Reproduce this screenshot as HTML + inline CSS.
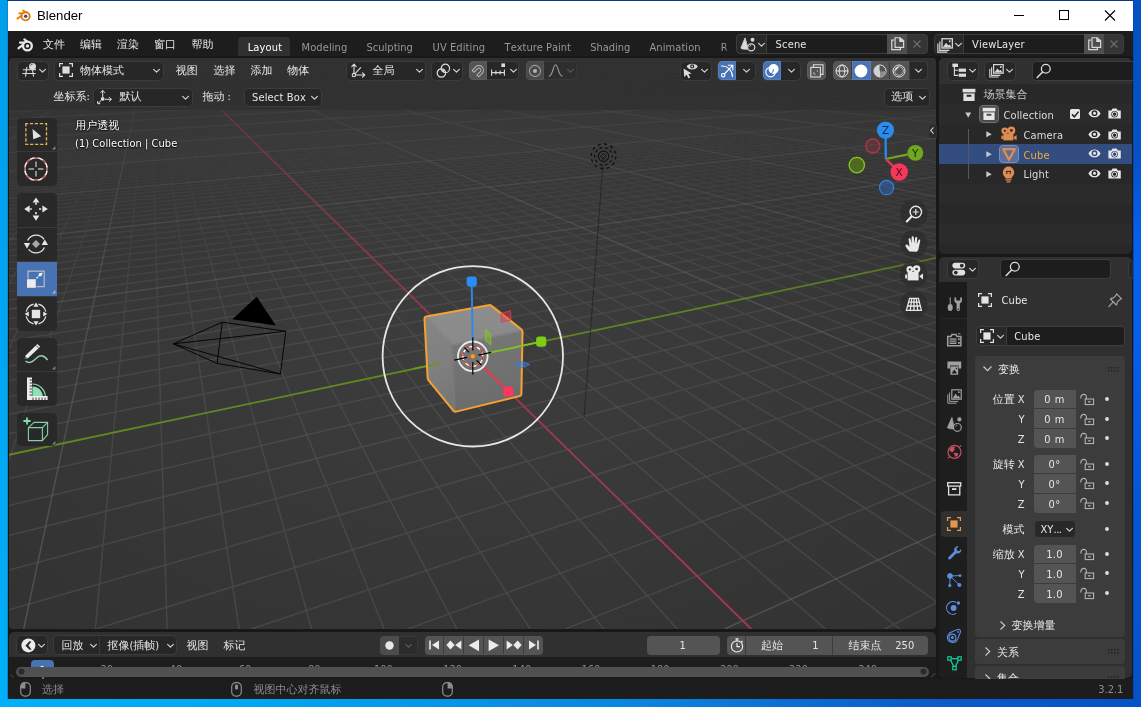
<!DOCTYPE html>
<html lang="zh"><head><meta charset="utf-8"><title>Blender</title>
<style>

html,body{margin:0;padding:0}
body{width:1141px;height:707px;overflow:hidden;position:relative;background:#0a56c8;
 font-family:"DejaVu Sans Condensed","DejaVu Sans","Liberation Sans","WenQuanYi Zen Hei","Noto Sans CJK SC",sans-serif;font-size:11px;color:#e6e6e6;line-height:1;font-kerning:none;font-variant-ligatures:none}
.abs,.abs *{position:absolute;box-sizing:border-box}
div,svg,span{position:absolute;box-sizing:border-box}
.t{white-space:nowrap;line-height:14px;height:14px}
.w{border-radius:4px;background:#282828;border:1px solid #3d3d3d}
svg{overflow:visible}

</style></head><body>
<div style="left:0;top:0;width:1141px;height:707px;background:linear-gradient(90deg,#00b0f8 0%,#00a8f3 20%,#0a86e0 55%,#0a5ecb 80%,#0652c8 100%)"></div>
<div style="left:1133px;top:0;width:8px;height:700px;background:linear-gradient(180deg,#0450c4 0%,#0452ca 22%,#0560ee 34%,#0560ee 46%,#0557d8 70%,#0552cc 100%)"></div>
<div style="left:0;top:0;width:7px;height:700px;background:linear-gradient(180deg,#009fec 0%,#00a6f1 50%,#00b0f8 100%)"></div>
<div style="left:7px;top:0;width:1127px;height:1px;background:#0c3a80"></div><div style="left:1133px;top:1px;width:1px;height:699px;background:#0a47b0"></div>
<div style="left:7px;top:1px;width:1px;height:698px;background:#1883c9"></div>
<div id="win" style="left:8px;top:1px;width:1125px;height:698px;background:#181818;overflow:hidden;will-change:transform">
<div style="left:0;top:0;width:1125px;height:30px;background:#fff"></div>
<svg style="left:8px;top:7px" width="16" height="16" viewBox="0 0 16 16"><g fill="none" stroke="#ea7600" stroke-width="1.9" stroke-linecap="round"><path d="M1.5 10.6 L7.4 6.2"/><path d="M3.2 5.4H8"/><path d="M7.2 2.6 L10 4.6"/></g><circle cx="9.6" cy="8.3" r="4.1" fill="#fff" stroke="#ea7600" stroke-width="1.9"/><circle cx="9.7" cy="8.2" r="1.75" fill="#1f5c9e"/></svg>
<span class="t" style="left:29px;top:7px;font-family:'Liberation Sans',sans-serif;font-size:13.2px;line-height:16px;height:16px;color:#000">Blender</span>
<svg style="left:1000px;top:0" width="125" height="30" viewBox="0 0 125 30" fill="none" stroke="#000" stroke-width="1"><path d="M6 14.5H16"/><rect x="51.5" y="9.5" width="9" height="9"/><path d="M97 9.5L107 19.5M107 9.5L97 19.5" stroke-width="1.1"/></svg>
<div style="left:0px;top:30px;width:1125px;height:25.4px;background:#1d1d1d"></div>
<svg style="left:9px;top:36.5px;" width="17" height="14" viewBox="0 0 17 14"><g fill="none" stroke="#e6e6e6" stroke-width="2.3" stroke-linecap="round"><path d="M1.6 10.2L8 5.4"/><path d="M3 4.6H8.6"/><path d="M7.4 1.4L10.6 3.8"/></g><circle cx="10.4" cy="8" r="4.4" fill="#1d1d1d" stroke="#e6e6e6" stroke-width="2.4"/><circle cx="10.5" cy="8" r="1.7" fill="#e6e6e6"/></svg>
<span class="t" style="left:35px;top:36.5px;color:#e6e6e6">文件</span>
<span class="t" style="left:72px;top:36.5px;color:#e6e6e6">编辑</span>
<span class="t" style="left:109px;top:36.5px;color:#e6e6e6">渲染</span>
<span class="t" style="left:146px;top:36.5px;color:#e6e6e6">窗口</span>
<span class="t" style="left:183.5px;top:36.5px;color:#e6e6e6">帮助</span>
<div style="left:230px;top:36px;width:52.2px;height:19.4px;background:#303030;border-radius:4px 4px 0 0"></div>
<span class="t" style="left:239.7px;top:40px;letter-spacing:0.16px;color:#ffffff">Layout</span>
<span class="t" style="left:293.6px;top:40px;letter-spacing:0.08px;color:#989898">Modeling</span>
<span class="t" style="left:358.5px;top:40px;letter-spacing:0.02px;color:#989898">Sculpting</span>
<span class="t" style="left:424.6px;top:40px;letter-spacing:0.09px;color:#989898">UV Editing</span>
<span class="t" style="left:496.6px;top:40px;letter-spacing:0px;color:#989898">Texture Paint</span>
<span class="t" style="left:582.2px;top:40px;letter-spacing:0px;color:#989898">Shading</span>
<span class="t" style="left:641.4px;top:40px;letter-spacing:0.1px;color:#989898">Animation</span>
<span class="t" style="left:712.7px;top:40px;letter-spacing:0px;color:#989898">Rendering</span>
<div style="left:717px;top:30px;width:11.5px;height:25.4px;background:linear-gradient(90deg,rgba(29,29,29,0),#1d1d1d 30%)"></div>
<div style="left:728px;top:33px;width:31.3px;height:20px;background:#282828;border:1px solid #3d3d3d;border-radius:4px 0 0 4px"></div>
<div style="left:758.3px;top:33px;width:121.1px;height:20px;background:#1d1d1d;border:1px solid #3d3d3d;border-right:none"></div>
<div style="left:879.4px;top:33px;width:20px;height:20px;background:#4d4d4d;border-top:1px solid #555;border-bottom:1px solid #555"></div>
<div style="left:899.4px;top:33px;width:20.2px;height:20px;background:#353535;border:1px solid #3d3d3d;border-left:none;border-radius:0 4px 4px 0"></div>
<span class="t" style="left:767.6px;top:37px;letter-spacing:.16px;color:#e6e6e6">Scene</span>
<svg style="left:882px;top:35.4px;" width="15.4" height="15.4" viewBox="0 0 14 14"><g fill="none" stroke="#d8d8d8" stroke-width="1.1"><path d="M3.6 3.8H1.6V12.4H9.4V10.6"/><path d="M4.6 1.6H9.2L12.4 4.4V10.4H4.6Z"/><path d="M9 1.6V4.8H12.4" fill="#d8d8d8"/></g></svg>
<svg style="left:905.4px;top:39px;" width="8" height="8" viewBox="0 0 8 8"><path d="M0.5 0.5L7.5 7.5M7.5 0.5L0.5 7.5" stroke="#6e6e6e" stroke-width="1.1" fill="none"/></svg>
<svg style="left:750.2px;top:41.5px;" width="7" height="3.6" viewBox="0 0 7 3.6"><path d="M0.6 0.3L3.5 3.2L6.4 0.3" fill="none" stroke="#d0d0d0" stroke-width="1.2" stroke-linecap="round" stroke-linejoin="round"/></svg>
<svg style="left:731.8px;top:35.6px;" width="17.3" height="15.1" viewBox="0 0 16 14"><path d="M4.7 0.8L0.8 10.2C0.6 11.2 7.4 12 7.5 10.9Z" fill="#d8d8d8" stroke="#d8d8d8" stroke-width=".7" stroke-linejoin="round"/><circle cx="11.6" cy="2.6" r="1.8" fill="#d8d8d8"/><circle cx="10.4" cy="9.6" r="3.3" fill="#282828" stroke="#d8d8d8" stroke-width="1.1"/><path d="M8.9 8.9A2 2 0 0 1 10.3 7.7" fill="none" stroke="#d8d8d8" stroke-width=".8"/></svg>
<div style="left:925.6px;top:33px;width:30.2px;height:20px;background:#282828;border:1px solid #3d3d3d;border-radius:4px 0 0 4px"></div>
<div style="left:954.8px;top:33px;width:121.2px;height:20px;background:#1d1d1d;border:1px solid #3d3d3d;border-right:none"></div>
<div style="left:1076px;top:33px;width:20px;height:20px;background:#4d4d4d;border-top:1px solid #555;border-bottom:1px solid #555"></div>
<div style="left:1096px;top:33px;width:20.3px;height:20px;background:#353535;border:1px solid #3d3d3d;border-left:none;border-radius:0 4px 4px 0"></div>
<span class="t" style="left:964.1px;top:37px;letter-spacing:.16px;color:#e6e6e6">ViewLayer</span>
<svg style="left:1078.6px;top:35.4px;" width="15.4" height="15.4" viewBox="0 0 14 14"><g fill="none" stroke="#d8d8d8" stroke-width="1.1"><path d="M3.6 3.8H1.6V12.4H9.4V10.6"/><path d="M4.6 1.6H9.2L12.4 4.4V10.4H4.6Z"/><path d="M9 1.6V4.8H12.4" fill="#d8d8d8"/></g></svg>
<svg style="left:1102px;top:39px;" width="8" height="8" viewBox="0 0 8 8"><path d="M0.5 0.5L7.5 7.5M7.5 0.5L0.5 7.5" stroke="#6e6e6e" stroke-width="1.1" fill="none"/></svg>
<svg style="left:946.7px;top:41.5px;" width="7" height="3.6" viewBox="0 0 7 3.6"><path d="M0.6 0.3L3.5 3.2L6.4 0.3" fill="none" stroke="#d0d0d0" stroke-width="1.2" stroke-linecap="round" stroke-linejoin="round"/></svg>
<svg style="left:929.4px;top:35.6px;" width="17.3" height="15.1" viewBox="0 0 16 14"><g fill="none" stroke="#d8d8d8" stroke-width="1.1"><path d="M2.6 4.2V12.4H11.4"/><path d="M0.8 6V14H9.6" /></g><rect x="4.6" y="1.6" width="9.6" height="8.6" fill="none" stroke="#d8d8d8" stroke-width="1.2"/><path d="M5.4 9.4L8.4 5.4L10.4 7.8L11.6 6.8L13.4 9.4Z" fill="#d8d8d8"/><circle cx="11.8" cy="4" r="0.9" fill="#d8d8d8"/></svg>
<div style="left:1px;top:57px;width:927px;height:571px;background:radial-gradient(ellipse farthest-corner at 50% 50%,#3d3d3d,#323232);border-radius:4px;overflow:hidden">
<svg style="left:0;top:0" width="927" height="571" viewBox="0 0 927 571" fill="none" stroke-width="1.5"><path stroke="#606060" stroke-opacity="0.03" d="M0.0 49.5L15.5 48.8M0.0 50.1L31.3 48.6M0.0 50.7L63.7 47.7M0.0 51.3L79.4 47.5M0.0 51.9L95.2 47.4M0.0 52.5L126.9 46.5M0.0 53.1L142.7 46.3M0.0 54.4L189.6 45.2M0.0 55.1L205.3 45.0M0.0 55.8L221.0 44.9M0.0 56.4L236.8 44.7M0.0 57.1L267.3 43.8M0.0 57.9L283.1 43.6M0.0 58.6L298.8 43.5M0.0 59.3L314.6 43.3M0.0 60.1L344.5 42.4M0.0 61.7L376.0 42.1M0.0 62.5L391.8 41.9M0.0 63.3L407.7 41.8M0.0 64.1L423.6 41.6M0.0 65.0L452.6 40.7M0.0 65.9L468.5 40.5M0.0 66.8L484.4 40.4M0.1 67.7L500.3 40.2M41.9 66.3L516.2 40.0M103.0 64.8L548.2 39.7M143.2 63.4L564.3 39.5M182.6 62.1L580.3 39.4M202.5 61.9L596.5 39.2M241.1 60.7L624.4 38.3M260.9 60.5L640.4 38.2M280.7 60.3L656.5 38.0M318.5 59.0L672.7 37.8M338.2 58.8L688.8 37.6M23.6 2.1L0.0 6.2M377.9 58.5L721.3 37.3M414.6 57.2L737.6 37.1M434.4 57.0L753.9 36.9M454.2 56.9L770.2 36.8M474.1 56.7L786.6 36.6M494.0 56.5L803.0 36.4M514.0 56.3L819.4 36.2M534.1 56.1L835.9 36.1M554.2 55.9L852.4 35.9M47.3 1.5L20.9 7.1M594.5 55.5L885.6 35.5M614.8 55.3L902.2 35.4M635.1 55.1L909.2 35.9M655.4 54.9L926.0 35.7M675.8 54.7L927.0 36.6M696.3 54.5L927.0 37.7M716.8 54.3L927.0 38.8M737.4 54.1L927.0 40.0M758.1 53.9L927.0 41.1M70.5 1.0L50.9 6.4M799.5 53.5L927.0 43.6M807.2 54.4L927.0 44.9M828.3 54.2L927.0 46.3M849.4 54.0L927.0 47.7M870.5 53.8L927.0 49.1M891.8 53.6L927.0 50.6M913.1 53.4L927.0 52.2M922.3 54.2L927.0 53.8M93.2 0.5L80.1 5.6M8.3 48.6L0.0 52.8M14.4 49.4L0.0 57.1M22.9 49.0L-0.0 62.1M31.3 48.6L0.1 67.7M39.7 48.3L11.0 67.1M115.2 0.0L108.4 4.8M56.2 47.5L32.5 65.9M63.0 48.3L43.1 65.3M71.2 47.9L51.5 66.7M79.4 47.5L62.1 66.1M87.5 47.2L72.6 65.5M95.6 46.8L83.0 65.0M102.9 47.6L93.2 64.4M111.0 47.2L103.4 63.8M119.0 46.8L112.8 65.2M136.9 0.0L136.0 4.1M134.8 46.1L133.2 64.0M142.6 45.7L143.2 63.4M150.6 46.5L153.1 62.9M158.4 46.1L162.9 62.3M166.2 45.7L172.6 61.8M173.9 45.4L183.1 63.1M181.6 45.0L192.8 62.5M190.0 45.8L202.5 61.9M197.7 45.4L212.0 61.4M212.8 44.7L230.8 60.3M220.3 44.3L242.3 61.6M229.3 45.1L251.6 61.0M236.8 44.7L260.9 60.5M244.2 44.3L270.1 59.9M251.6 44.0L279.1 59.4M258.9 43.6L291.5 60.6M268.5 44.4L300.6 60.1M275.8 44.0L309.6 59.6M182.6 0.0L188.9 2.7M290.3 43.3L327.3 58.5M297.4 42.9L340.5 59.7M307.5 43.7L349.3 59.2M314.6 43.3L358.0 58.7M321.7 43.0L366.7 58.1M328.8 42.6L375.2 57.6M335.7 42.2L389.2 58.8M346.3 43.0L397.8 58.3M353.3 42.6L406.2 57.8M206.8 0.0L214.3 2.1M367.1 41.9L422.9 56.7M378.2 42.6L437.7 57.9M385.0 42.3L446.0 57.4M391.8 41.9L454.2 56.9M398.6 41.6L462.3 56.3M405.3 41.2L470.4 55.8M416.9 41.9L486.0 57.0M423.6 41.6L494.0 56.5M430.2 41.2L502.0 56.0M231.9 0.0L239.0 1.4M443.4 40.5L526.2 56.6M455.5 41.2L534.1 56.1M462.0 40.9L541.8 55.6M468.5 40.5L549.5 55.1M474.9 40.2L566.6 56.2M487.5 40.9L574.3 55.7M493.9 40.6L581.9 55.2M500.3 40.2L589.4 54.7M506.6 39.9L607.3 55.8M258.0 0.0L263.1 0.8M525.9 40.2L622.2 54.8M532.2 39.9L629.5 54.3M538.4 39.5L648.1 55.4M544.6 39.2L655.4 54.9M558.1 39.9L662.6 54.4M564.3 39.5L669.8 53.9M570.3 39.2L689.2 55.1M576.4 38.8L696.3 54.5M590.4 39.5L703.3 54.0M285.1 0.0L288.7 0.4M602.4 38.8L730.5 54.7M608.3 38.5L737.4 54.1M614.2 38.2L744.3 53.6M628.8 38.8L765.3 54.8M634.6 38.5L772.0 54.3M640.4 38.2L778.8 53.7M646.2 37.8L785.4 53.2M661.3 38.5L807.2 54.4M667.0 38.2L813.8 53.9M678.3 37.5L842.9 54.5M693.9 38.1L849.4 54.0M699.5 37.8L855.8 53.5M705.0 37.5L879.2 54.6M710.6 37.1L885.5 54.1M726.6 37.8L891.8 53.6M732.1 37.5L898.0 53.1M737.6 37.1L922.3 54.2M743.0 36.8L927.0 53.6M764.9 37.1L927.0 51.5M770.2 36.8L927.0 50.5M775.5 36.4L927.0 49.5M792.5 37.1L927.0 48.5M797.8 36.8L927.0 47.6M803.0 36.4L927.0 46.6M808.1 36.1L927.0 45.7M825.7 36.7L927.0 44.9M830.8 36.4L927.0 44.0M841.0 35.7L927.0 42.4M859.0 36.4L927.0 41.6M864.0 36.1L927.0 40.8M869.0 35.7L927.0 40.0M873.9 35.4L927.0 39.3M892.4 36.0L927.0 38.5M897.3 35.7L927.0 37.8M902.2 35.4L927.0 37.1M921.3 36.0L927.0 36.4M0.0 2.9L121.7 0.0M0.0 3.4L140.7 0.0M0.0 3.9L160.4 0.0M0.0 4.5L180.7 0.0M0.0 5.0L201.7 0.0M0.0 5.6L223.4 0.0M0.0 6.3L245.9 0.0M-0.0 7.0L269.1 0.0"/>
<path stroke="#606060" stroke-opacity="0.06" d="M860.4 3.3L927.0 0.6M919.5 3.3L927.0 3.0M0.0 68.6L41.9 66.3M0.0 70.6L103.0 64.8M0.0 71.6L143.2 63.4M0.0 72.6L182.6 62.1M0.0 73.6L202.5 61.9M0.0 74.7L241.1 60.7M0.0 75.8L260.9 60.5M0.0 77.0L280.7 60.3M0.0 78.1L318.5 59.0M0.0 79.3L338.2 58.8M0.0 81.8L377.9 58.5M0.0 83.1L414.6 57.2M0.0 84.4L434.4 57.0M20.7 84.4L454.2 56.9M70.7 82.6L474.1 56.7M119.6 80.8L494.0 56.5M167.4 79.0L514.0 56.3M214.3 77.3L534.1 56.1M238.0 77.1L554.2 55.9M20.9 7.1L0.0 11.5M307.3 75.2L594.5 55.5M351.9 73.6L614.8 55.3M375.4 73.4L635.1 55.1M399.0 73.2L655.4 54.9M422.7 73.0L675.8 54.7M465.9 71.3L696.3 54.5M489.4 71.1L716.8 54.3M513.1 70.9L737.4 54.1M536.8 70.7L758.1 53.9M50.9 6.4L13.2 16.7M584.4 70.3L799.5 53.5M608.4 70.1L807.2 54.4M632.4 69.9L828.3 54.2M656.5 69.7L849.4 54.0M680.6 69.5L870.5 53.8M688.1 70.7L891.8 53.6M712.6 70.5L913.1 53.4M737.3 70.3L922.3 54.2M762.1 70.1L927.0 55.5M80.1 5.6L55.1 15.4M795.9 71.1L927.0 59.1M821.2 70.9L927.0 61.0M846.6 70.7L927.0 63.1M872.0 70.5L927.0 65.1M882.5 71.7L927.0 67.3M908.4 71.5L927.0 69.6M11.0 67.1L0.0 74.3M108.4 4.8L95.4 14.1M32.5 65.9L7.6 85.2M43.1 65.3L20.7 84.4M51.5 66.7L33.7 83.6M62.1 66.1L46.5 82.8M72.6 65.5L59.2 82.0M83.0 65.0L71.7 81.2M93.2 64.4L82.4 83.2M103.4 63.8L95.0 82.4M112.8 65.2L107.4 81.6M136.0 4.1L134.1 12.9M133.2 64.0L131.7 80.0M143.2 63.4L143.6 79.2M153.1 62.9L155.4 78.4M162.9 62.3L167.1 77.7M172.6 61.8L179.7 79.6M183.1 63.1L191.3 78.8M192.8 62.5L202.9 78.1M202.5 61.9L214.3 77.3M212.0 61.4L225.6 76.6M230.8 60.3L250.7 77.7M242.3 61.6L261.8 76.9M251.6 61.0L272.8 76.2M260.9 60.5L283.7 75.4M270.1 59.9L294.5 74.7M279.1 59.4L305.1 74.0M291.5 60.6L320.4 75.8M300.6 60.1L331.0 75.0M309.6 59.6L341.5 74.3M188.9 2.7L207.2 10.7M327.3 58.5L362.2 72.9M340.5 59.7L378.6 74.6M349.3 59.2L388.9 73.9M358.0 58.7L399.0 73.2M366.7 58.1L409.1 72.5M375.2 57.6L418.9 71.7M389.2 58.8L436.6 73.5M397.8 58.3L446.4 72.8M406.2 57.8L456.2 72.0M214.3 2.1L241.8 9.6M422.9 56.7L475.4 70.6M437.7 57.9L494.2 72.4M446.0 57.4L503.7 71.6M454.2 56.9L513.1 70.9M462.3 56.3L522.4 70.2M470.4 55.8L542.2 71.9M486.0 57.0L551.4 71.2M494.0 56.5L560.6 70.5M502.0 56.0L569.6 69.8M239.0 1.4L275.0 8.6M526.2 56.6L599.5 70.8M534.1 56.1L608.4 70.1M541.8 55.6L617.2 69.4M549.5 55.1L639.1 71.1M566.6 56.2L647.8 70.4M574.3 55.7L656.5 69.7M581.9 55.2L665.0 69.0M589.4 54.7L688.1 70.7M607.3 55.8L696.5 70.0M263.1 0.8L310.6 8.2M622.2 54.8L729.0 71.0M629.5 54.3L737.3 70.3M648.1 55.4L745.5 69.6M655.4 54.9L770.8 71.3M662.6 54.4L778.9 70.6M669.8 53.9L786.9 69.9M689.2 55.1L813.3 71.6M696.3 54.5L821.2 70.9M703.3 54.0L829.0 70.2M288.7 0.4L342.1 7.2M730.5 54.7L864.4 71.2M737.4 54.1L872.0 70.5M744.3 53.6L900.8 72.3M765.3 54.8L908.4 71.5M772.0 54.3L915.8 70.8M778.8 53.7L927.0 70.5M785.4 53.2L927.0 68.9M807.2 54.4L927.0 67.4M813.8 53.9L927.0 66.0M313.4 0.0L377.3 6.7M842.9 54.5L927.0 63.2M849.4 54.0L927.0 61.9M855.8 53.5L927.0 60.6M879.2 54.6L927.0 59.4M885.5 54.1L927.0 58.1M891.8 53.6L927.0 56.9M898.0 53.1L927.0 55.8M922.3 54.2L927.0 54.7M342.9 0.0L407.2 5.8M373.7 0.0L441.9 5.3M405.8 0.0L476.8 4.9M474.4 0.0L547.1 4.0M511.2 0.0L582.5 3.5M0.0 8.5L318.1 0.0M0.0 9.3L343.9 0.0M0.0 10.2L370.7 0.0M0.0 11.1L398.6 0.0M0.0 12.1L427.5 0.0M0.0 13.2L457.6 0.0M0.0 14.4L488.9 0.0M0.0 15.7L521.5 0.0M0.0 17.1L13.2 16.7M241.8 9.6L555.5 0.0M504.6 4.0L628.0 0.0M573.8 3.1L666.7 0.0M591.5 3.9L707.2 0.0M664.3 3.0L749.6 0.0M686.7 3.9L794.1 0.0M763.5 2.9L840.8 0.0M791.4 3.9L889.8 0.0M549.7 0.0L638.0 3.9M590.2 0.0L664.3 3.0M632.7 0.0L737.8 3.9M677.4 0.0L763.5 2.9M724.5 0.0L847.8 3.8M774.2 0.0L872.6 2.8M826.7 0.0L927.0 2.7"/>
<path stroke="#606060" stroke-opacity="0.09" d="M550.1 16.1L860.4 3.3M633.4 15.6L919.5 3.3M774.9 16.4L927.0 9.0M853.3 16.8L927.0 13.0M920.3 18.2L927.0 17.8M0.0 85.7L20.7 84.4M0.0 87.1L70.7 82.6M0.0 88.5L119.6 80.8M0.0 90.0L167.4 79.0M0.0 91.5L214.3 77.3M0.0 93.1L238.0 77.1M0.0 96.3L307.3 75.2M-0.0 98.0L351.9 73.6M0.0 99.7L375.4 73.4M0.0 101.5L399.0 73.2M29.2 101.3L422.7 73.0M87.4 98.9L465.9 71.3M144.1 96.7L489.4 71.1M199.5 94.4L513.1 70.9M253.5 92.2L536.8 70.7M13.2 16.7L0.0 20.2M333.5 89.9L584.4 70.3M361.0 89.7L608.4 70.1M412.0 87.6L632.4 69.9M439.3 87.4L656.5 69.7M466.7 87.2L680.6 69.5M494.3 87.0L688.1 70.7M521.9 86.8L712.6 70.5M549.6 86.6L737.3 70.3M577.5 86.4L762.1 70.1M55.1 15.4L14.8 31.2M633.5 85.9L795.9 71.1M661.6 85.7L821.2 70.9M689.9 85.5L846.6 70.7M698.7 87.2L872.0 70.5M727.6 87.0L882.5 71.7M756.5 86.7L908.4 71.5M785.5 86.5L927.0 72.0M814.7 86.3L927.0 74.6M825.8 88.0L927.0 77.2M95.4 14.1L76.7 27.4M885.5 87.6L927.0 83.0M7.6 85.2L0.0 91.1M898.0 89.4L927.0 86.1M20.7 84.4L0.7 101.5M33.7 83.6L16.0 100.4M46.5 82.8L27.3 103.3M59.2 82.0L42.7 102.2M71.7 81.2L57.8 101.1M82.4 83.2L72.7 100.0M95.0 82.4L87.4 98.9M107.4 81.6L101.9 97.9M134.1 12.9L131.4 25.4M131.7 80.0L130.2 95.8M143.6 79.2L144.1 94.8M155.4 78.4L158.3 97.5M167.1 77.7L172.2 96.5M179.7 79.6L186.0 95.4M191.3 78.8L199.5 94.4M202.9 78.1L212.8 93.4M214.3 77.3L226.0 92.4M225.6 76.6L238.9 91.5M250.7 77.7L268.3 93.0M261.8 76.9L281.1 92.0M272.8 76.2L293.7 91.1M283.7 75.4L306.1 90.1M294.5 74.7L318.4 89.2M305.1 74.0L330.5 88.2M320.4 75.8L348.9 90.6M331.0 75.0L361.0 89.7M341.5 74.3L372.9 88.7M207.2 10.7L232.4 21.6M362.2 72.9L396.3 86.9M378.6 74.6L416.2 89.3M388.9 73.9L427.9 88.3M399.0 73.2L439.3 87.4M409.1 72.5L450.6 86.5M418.9 71.7L461.7 85.6M436.6 73.5L483.2 87.9M446.4 72.8L494.3 87.0M456.2 72.0L505.2 86.1M241.8 9.6L283.1 21.0M475.4 70.6L538.9 87.5M494.2 72.4L549.6 86.6M503.7 71.6L560.3 85.6M513.1 70.9L570.7 84.7M522.4 70.2L595.0 87.1M542.2 71.9L605.4 86.1M551.4 71.2L615.7 85.2M560.6 70.5L641.4 87.6M569.6 69.8L651.6 86.7M275.0 8.6L328.7 19.3M599.5 70.8L671.5 84.8M608.4 70.1L698.7 87.2M617.2 69.4L708.6 86.2M639.1 71.1L718.2 85.3M647.8 70.4L746.9 87.7M656.5 69.7L756.5 86.7M665.0 69.0L766.0 85.8M688.1 70.7L796.2 88.3M696.5 70.0L805.5 87.3M310.6 8.2L378.6 18.7M729.0 71.0L846.5 88.8M737.3 70.3L855.6 87.8M745.5 69.6L864.5 86.8M770.8 71.3L898.0 89.4M778.9 70.6L906.8 88.4M786.9 69.9L927.0 89.0M813.3 71.6L927.0 86.8M821.2 70.9L927.0 84.7M829.0 70.2L927.0 82.7M342.1 7.2L420.8 17.1M864.4 71.2L927.0 78.9M872.0 70.5L927.0 77.1M900.8 72.3L927.0 75.4M908.4 71.5L927.0 73.7M915.8 70.8L927.0 72.0M377.3 6.7L470.0 16.5M407.2 5.8L519.5 15.9M441.9 5.3L569.3 15.3M476.8 4.9L633.4 15.6M547.1 4.0L774.9 16.4M582.5 3.5L853.3 16.8M13.2 16.7L241.8 9.6M0.0 20.2L504.6 4.0M0.0 22.1L573.8 3.1M0.0 24.1L591.5 3.9M0.0 26.3L664.3 3.0M0.0 28.9L686.7 3.9M283.1 21.0L763.5 2.9M470.0 16.5L791.4 3.9M638.0 3.9L927.0 16.8M664.3 3.0L927.0 13.6M737.8 3.9L927.0 10.9M763.5 2.9L927.0 8.5M847.8 3.8L927.0 6.3M872.6 2.8L927.0 4.4"/>
<path stroke="#606060" stroke-opacity="0.12" d="M0.0 38.6L550.1 16.1M0.0 42.9L633.4 15.6M514.9 28.9L774.9 16.4M623.4 28.7L853.3 16.8M737.6 28.4L920.3 18.2M812.5 30.9L927.0 23.9M921.0 32.2L927.0 31.8M0.0 103.4L29.2 101.3M0.0 105.3L87.4 98.9M0.0 107.3L144.1 96.7M0.0 109.3L199.5 94.4M0.0 111.5L253.5 92.2M0.0 115.9L333.5 89.9M0.0 118.3L361.0 89.7M0.0 120.7L412.0 87.6M79.3 116.7L439.3 87.4M144.6 113.8L466.7 87.2M208.1 111.0L494.3 87.0M269.9 108.3L521.9 86.8M329.9 105.6L549.6 86.6M361.2 105.4L577.5 86.4M14.8 31.2L0.0 36.9M450.5 102.6L633.5 85.9M481.8 102.4L661.6 85.7M513.3 102.2L689.9 85.5M544.8 102.0L698.7 87.2M576.6 101.8L727.6 87.0M608.4 101.6L756.5 86.7M640.4 101.4L785.5 86.5M649.5 103.6L814.7 86.3M682.2 103.4L825.8 88.0M76.7 27.4L55.1 42.8M748.1 103.0L885.5 87.6M781.2 102.8L898.0 89.4M0.7 101.5L0.0 102.1M793.3 105.0L927.0 89.3M16.0 100.4L0.0 115.6M827.2 104.8L927.0 92.8M27.3 103.3L9.5 122.4M861.3 104.6L927.0 96.5M42.7 102.2L27.4 121.0M875.2 107.0L927.0 100.4M57.8 101.1L45.0 119.5M910.1 106.8L927.0 104.6M72.7 100.0L62.3 118.1M925.3 109.2L927.0 109.0M87.4 98.9L79.3 116.7M101.9 97.9L96.0 115.4M131.4 25.4L128.4 39.6M130.2 95.8L128.7 112.7M144.1 94.8L144.6 111.4M158.3 97.5L161.0 115.0M172.2 96.5L177.0 113.7M186.0 95.4L192.7 112.3M199.5 94.4L208.1 111.0M212.8 93.4L223.4 109.8M226.0 92.4L238.3 108.5M238.9 91.5L253.1 107.3M268.3 93.0L287.0 109.4M281.1 92.0L301.5 108.1M293.7 91.1L315.8 106.9M306.1 90.1L329.9 105.6M318.4 89.2L343.7 104.4M330.5 88.2L357.4 103.3M348.9 90.6L379.1 106.5M361.0 89.7L392.7 105.2M372.9 88.7L406.1 104.0M232.4 21.6L260.3 33.8M396.3 86.9L432.3 101.7M416.2 89.3L456.1 104.8M427.9 88.3L469.1 103.6M439.3 87.4L481.8 102.4M450.6 86.5L494.4 101.3M461.7 85.6L520.0 104.4M483.2 87.9L532.5 103.2M494.3 87.0L544.8 102.0M505.2 86.1L557.0 100.9M283.1 21.0L326.7 33.0M538.9 87.5L596.5 102.8M549.6 86.6L608.4 101.6M560.3 85.6L620.1 100.4M570.7 84.7L649.5 103.6M595.0 87.1L661.1 102.4M605.4 86.1L672.5 101.2M615.7 85.2L703.8 104.4M641.4 87.6L715.1 103.2M651.6 86.7L726.2 102.0M328.7 19.3L384.3 30.4M671.5 84.8L770.5 104.0M698.7 87.2L781.2 102.8M708.6 86.2L816.6 106.1M718.2 85.3L827.2 104.8M746.9 87.7L837.7 103.6M756.5 86.7L875.2 107.0M766.0 85.8L885.5 105.7M796.2 88.3L925.3 109.2M805.5 87.3L927.0 106.6M378.6 18.7L449.3 29.7M846.5 88.8L927.0 101.0M855.6 87.8L927.0 98.4M864.5 86.8L927.0 95.9M898.0 89.4L927.0 93.5M906.8 88.4L927.0 91.2M420.8 17.1L514.9 28.9M470.0 16.5L581.0 28.2M519.5 15.9L647.7 27.4M569.3 15.3L737.6 28.4M633.4 15.6L865.5 31.5M774.9 16.4L927.0 24.6M853.3 16.8L927.0 20.4M0.0 31.7L283.1 21.0M0.0 34.9L470.0 16.5"/>
<path stroke="#606060" stroke-opacity="0.15" d="M0.0 53.8L514.9 28.9M250.2 47.9L623.4 28.7M519.6 40.6L737.6 28.4M653.2 40.6L812.5 30.9M767.2 42.6L921.0 32.2M921.6 42.8L927.0 42.3M0.0 123.2L79.3 116.7M0.0 125.8L144.6 113.8M0.0 128.5L208.1 111.0M0.0 131.3L269.9 108.3M0.0 134.3L329.9 105.6M0.0 137.3L361.2 105.4M108.2 133.9L450.5 102.6M216.5 127.1L481.8 102.4M285.7 123.8L513.3 102.2M321.3 123.6L544.8 102.0M387.9 120.4L576.6 101.8M423.3 120.2L608.4 101.6M458.8 120.0L640.4 101.4M494.5 119.8L649.5 103.6M530.4 119.6L682.2 103.4M55.1 42.8L37.6 55.3M602.7 119.2L748.1 103.0M639.1 119.0L781.2 102.8M675.6 118.8L793.3 105.0M686.8 121.7L827.2 104.8M9.5 122.4L0.0 132.6M724.4 121.5L861.3 104.6M27.4 121.0L12.4 139.4M762.1 121.3L875.2 107.0M45.0 119.5L32.4 137.6M800.0 121.1L910.1 106.8M62.3 118.1L52.1 135.8M814.3 124.1L925.3 109.2M79.3 116.7L71.4 134.1M853.2 123.9L927.0 113.7M96.0 115.4L90.3 132.4M128.4 39.6L125.2 54.4M909.0 126.9L927.0 124.2M128.7 112.7L126.5 135.5M144.6 111.4L145.2 133.7M161.0 115.0L163.6 132.0M177.0 113.7L181.5 130.4M192.7 112.3L199.2 128.7M208.1 111.0L216.5 127.1M223.4 109.8L233.5 125.5M238.3 108.5L250.2 124.0M253.1 107.3L266.7 122.5M287.0 109.4L305.1 125.2M301.5 108.1L321.3 123.6M315.8 106.9L337.1 122.1M329.9 105.6L352.7 120.6M343.7 104.4L368.0 119.1M357.4 103.3L393.0 123.2M379.1 106.5L408.3 121.7M392.7 105.2L423.3 120.2M406.1 104.0L438.0 118.7M260.3 33.8L288.4 46.0M432.3 101.7L480.1 121.3M456.1 104.8L494.5 119.8M469.1 103.6L508.7 118.3M481.8 102.4L522.6 116.9M494.4 101.3L552.6 120.9M520.0 104.4L566.5 119.4M532.5 103.2L580.1 117.9M544.8 102.0L593.4 116.5M557.0 100.9L625.8 120.6M326.7 33.0L370.6 45.1M596.5 102.8L652.1 117.5M608.4 101.6L686.8 121.7M620.1 100.4L699.7 120.2M649.5 103.6L712.4 118.6M661.1 102.4L749.6 122.9M672.5 101.2L762.1 121.3M703.8 104.4L774.4 119.8M715.1 103.2L814.3 124.1M726.2 102.0L826.3 122.5M384.3 30.4L439.5 41.4M770.5 104.0L880.8 125.4M781.2 102.8L892.4 123.7M816.6 106.1L927.0 126.4M827.2 104.8L927.0 122.7M837.7 103.6L927.0 119.2M875.2 107.0L927.0 115.8M885.5 105.7L927.0 112.6M925.3 109.2L927.0 109.5M449.3 29.7L519.6 40.6M514.9 28.9L622.7 42.5M581.0 28.2L708.7 41.6M647.7 27.4L829.0 43.7M737.6 28.4L921.6 42.8M865.5 31.5L927.0 35.7"/>
<path stroke="#606060" stroke-opacity="0.18" d="M125.2 54.4L250.2 47.9M303.7 52.6L519.6 40.6M522.9 48.6L653.2 40.6M737.5 44.6L767.2 42.6M0.0 143.8L108.2 133.9M0.0 147.3L216.5 127.1M0.0 150.9L285.7 123.8M0.0 154.6L321.3 123.6M0.0 158.6L387.9 120.4M61.2 156.5L423.3 120.2M186.4 147.9L458.8 120.0M265.5 143.8L494.5 119.8M341.9 139.8L530.4 119.6M421.9 139.5L602.7 119.2M494.6 135.6L639.1 119.0M534.5 135.4L675.6 118.8M574.5 135.2L686.8 121.7M614.8 135.1L724.4 121.5M12.4 139.4L0.0 154.6M625.8 138.6L762.1 121.3M32.4 137.6L16.1 161.1M667.2 138.4L800.0 121.1M52.1 135.8L38.9 158.8M708.9 138.3L814.3 124.1M71.4 134.1L61.2 156.5M750.8 138.1L853.2 123.9M90.3 132.4L83.0 154.4M808.6 141.7L909.0 126.9M126.5 135.5L125.2 150.1M852.1 141.5L927.0 130.1M145.2 133.7L145.7 148.1M869.6 145.5L927.0 136.4M163.6 132.0L165.7 146.1M914.4 145.3L927.0 143.2M181.5 130.4L185.3 144.1M199.2 128.7L207.6 149.8M216.5 127.1L227.3 147.8M233.5 125.5L246.6 145.8M250.2 124.0L265.5 143.8M266.7 122.5L284.0 141.8M305.1 125.2L319.9 138.1M321.3 123.6L346.6 143.5M337.1 122.1L364.3 141.5M352.7 120.6L381.8 139.6M368.0 119.1L398.9 137.7M393.0 123.2L415.6 135.9M408.3 121.7L445.5 141.2M423.3 120.2L462.2 139.3M438.0 118.7L478.6 137.4M288.4 46.0L303.7 52.6M480.1 121.3L510.4 133.8M494.5 119.8L543.6 139.0M508.7 118.3L559.2 137.1M522.6 116.9L574.5 135.2M552.6 120.9L589.5 133.4M566.5 119.4L625.8 138.6M580.1 117.9L640.7 136.7M593.4 116.5L655.3 134.9M625.8 120.6L694.5 140.2M370.6 45.1L394.6 51.7M652.1 117.5L723.0 136.4M686.8 121.7L765.4 141.8M699.7 120.2L779.3 139.9M712.4 118.6L825.1 145.6M749.6 122.9L838.7 143.5M762.1 121.3L852.1 141.5M774.4 119.8L901.4 147.4M814.3 124.1L914.4 145.3M826.3 122.5L927.0 143.2M439.5 41.4L486.6 50.8M880.8 125.4L927.0 134.4M892.4 123.7L927.0 130.3M519.6 40.6L557.7 46.5M622.7 42.5L647.1 45.6M708.7 41.6L737.5 44.6"/>
<path stroke="#606060" stroke-opacity="0.21" d="M0.0 162.7L61.2 156.5M0.0 167.0L186.4 147.9M0.0 171.6L265.5 143.8M0.0 176.3L341.9 139.8M146.3 170.3L421.9 139.5M236.4 165.2L494.6 135.6M322.9 160.2L534.5 135.4M367.7 160.1L574.5 135.2M450.3 155.4L614.8 135.1M494.8 155.2L625.8 138.6M16.1 161.1L2.2 181.1M539.6 155.1L667.2 138.4M38.9 158.8L27.6 178.3M584.6 155.0L708.9 138.3M61.2 156.5L52.5 175.6M629.9 154.8L750.8 138.1M83.0 154.4L76.7 173.0M689.6 159.2L808.6 141.7M125.2 150.1L123.6 167.8M736.7 159.1L852.1 141.5M145.7 148.1L146.5 175.4M784.1 159.0L869.6 145.5M165.7 146.1L169.7 172.8M801.5 163.8L914.4 145.3M185.3 144.1L192.5 170.2M850.6 163.7L927.0 150.7M207.6 149.8L214.7 167.6M870.5 168.8L927.0 158.8M227.3 147.8L236.4 165.2M921.3 168.6L927.0 167.6M246.6 145.8L257.5 162.7M265.5 143.8L278.3 160.4M284.0 141.8L298.5 158.0M319.9 138.1L347.9 162.5M346.6 143.5L367.7 160.1M364.3 141.5L387.1 157.8M381.8 139.6L406.0 155.5M398.9 137.7L424.6 153.3M415.6 135.9L458.3 159.9M445.5 141.2L476.8 157.5M462.2 139.3L494.8 155.2M478.6 137.4L512.4 153.0M510.4 133.8L567.5 157.3M543.6 139.0L584.6 155.0M559.2 137.1L601.4 152.7M574.5 135.2L642.7 159.4M589.5 133.4L659.3 157.0M625.8 138.6L675.5 154.7M640.7 136.7L720.7 161.5M655.3 134.9L736.7 159.1M694.5 140.2L752.3 156.7M723.0 136.4L816.8 161.3M765.4 141.8L870.5 168.8M779.3 139.9L885.4 166.1M825.1 145.6L927.0 170.0M838.7 143.5L927.0 164.0M852.1 141.5L927.0 158.3M901.4 147.4L927.0 153.0M914.4 145.3L927.0 148.0"/>
<path stroke="#606060" stroke-opacity="0.24" d="M-0.0 186.6L146.3 170.3M0.0 192.2L236.4 165.2M0.0 198.1L322.9 160.2M0.0 204.4L367.7 160.1M147.0 192.8L450.3 155.4M247.5 186.6L494.8 155.2M2.2 181.1L0.0 184.2M343.7 180.6L539.6 155.1M27.6 178.3L13.6 202.7M435.7 174.9L584.6 155.0M52.5 175.6L41.7 199.3M485.1 174.9L629.9 154.8M76.7 173.0L69.0 196.1M584.7 174.7L689.6 159.2M123.6 167.8L121.5 189.7M635.0 174.6L736.7 159.1M146.5 175.4L147.2 199.3M649.4 180.2L784.1 159.0M169.7 172.8L173.3 196.0M701.5 180.1L801.5 163.8M192.5 170.2L198.7 192.8M754.1 180.1L850.6 163.7M214.7 167.6L223.4 189.7M772.6 186.1L870.5 168.8M236.4 165.2L247.5 186.6M827.2 186.0L921.3 168.6M257.5 162.7L271.0 183.6M848.7 192.4L927.0 177.3M278.3 160.4L293.9 180.7M905.4 192.4L927.0 188.0M298.5 158.0L316.3 177.9M347.9 162.5L372.0 183.5M367.7 160.1L393.8 180.6M387.1 157.8L415.0 177.7M406.0 155.5L435.7 174.9M424.6 153.3L455.9 172.2M458.3 159.9L495.0 180.4M476.8 157.5L515.1 177.6M494.8 155.2L534.7 174.8M512.4 153.0L553.8 172.0M567.5 157.3L616.5 177.4M584.6 155.0L635.0 174.6M601.4 152.7L683.3 183.1M642.7 159.4L701.5 180.1M659.3 157.0L719.3 177.2M675.5 154.7L772.6 186.1M720.7 161.5L790.0 183.0M736.7 159.1L848.7 192.4M752.3 156.7L865.6 189.1M816.8 161.3L927.0 190.5M870.5 168.8L927.0 183.2M885.4 166.1L927.0 176.4"/>
<path stroke="#606060" stroke-opacity="0.27" d="M0.0 211.0L147.0 192.8M0.0 218.0L247.5 186.6M0.0 225.5L343.7 180.6M13.6 202.7L0.0 226.3M0.0 233.4L435.7 174.9M41.7 199.3L27.8 229.7M204.4 213.7L485.1 174.9M69.0 196.1L59.1 225.5M417.6 199.3L584.7 174.7M121.5 189.7L119.0 217.5M472.9 199.3L635.0 174.6M147.2 199.3L147.6 213.6M528.6 199.3L649.4 180.2M173.3 196.0L175.4 209.9M584.7 199.3L701.5 180.1M198.7 192.8L202.4 206.3M641.2 199.3L754.1 180.1M223.4 189.7L234.5 217.6M657.7 206.4L772.6 186.1M247.5 186.6L261.7 213.7M716.6 206.4L827.2 186.0M271.0 183.6L288.0 210.0M775.9 206.5L848.7 192.4M293.9 180.7L313.6 206.3M797.7 214.2L905.4 192.4M316.3 177.9L338.5 202.8M885.3 222.5L927.0 213.2M372.0 183.5L386.3 195.9M393.8 180.6L426.6 206.3M415.0 177.7L450.1 202.8M435.7 174.9L472.9 199.3M455.9 172.2L495.1 195.9M495.0 180.4L516.7 192.6M515.1 177.6L563.3 202.8M534.7 174.8L584.7 199.3M553.8 172.0L605.5 195.9M616.5 177.4L678.2 202.8M635.0 174.6L698.2 199.3M683.3 183.1L756.4 210.2M701.5 180.1L775.9 206.5M719.3 177.2L840.7 218.3M772.6 186.1L859.7 214.2M790.0 183.0L927.0 225.4M848.7 192.4L927.0 215.7M865.6 189.1L927.0 206.7"/>
<path stroke="#606060" stroke-opacity="0.3" d="M27.8 229.7L9.5 269.9M0.0 241.9L204.4 213.7M59.1 225.5L46.1 264.3M0.0 260.8L417.6 199.3M119.0 217.5L115.6 253.7M211.4 239.1L472.9 199.3M147.6 213.6L148.6 248.7M332.1 230.3L528.6 199.3M175.4 209.9L180.5 243.8M394.5 230.4L584.7 199.3M202.4 206.3L211.4 239.1M507.6 222.0L641.2 199.3M234.5 217.6L241.3 234.6M569.3 222.1L657.7 206.4M261.7 213.7L270.3 230.2M584.8 230.8L716.6 206.4M288.0 210.0L298.3 225.9M649.3 230.9L775.9 206.5M313.6 206.3L325.5 221.7M714.3 231.0L797.7 214.2M338.5 202.8L367.3 234.9M804.3 240.6L885.3 222.5M386.3 195.9L420.9 226.1M873.1 240.8L927.0 228.1M426.6 206.3L446.4 221.9M902.2 251.1L927.0 244.9M450.1 202.8L471.2 217.8M472.9 199.3L520.8 230.6M495.1 195.9L545.4 226.3M516.7 192.6L569.3 222.1M563.3 202.8L625.8 235.4M584.7 199.3L649.3 230.9M605.5 195.9L672.1 226.5M678.2 202.8L758.4 235.7M698.2 199.3L780.0 231.1M756.4 210.2L852.2 245.8M775.9 206.5L873.1 240.8M840.7 218.3L927.0 247.4M859.7 214.2L927.0 236.0"/>
<path stroke="#606060" stroke-opacity="0.33" d="M9.5 269.9L0.0 290.8M46.1 264.3L37.9 288.8M115.6 253.7L113.5 276.4M0.0 271.3L211.4 239.1M148.6 248.7L149.2 270.5M0.0 282.7L332.1 230.3M180.5 243.8L183.7 264.9M0.0 295.0L394.5 230.4M211.4 239.1L217.0 259.5M220.1 270.9L507.6 222.0M241.3 234.6L258.2 277.1M355.0 260.0L569.3 222.1M270.3 230.2L291.7 271.2M425.0 260.3L584.8 230.8M298.3 225.9L323.9 265.5M495.6 260.5L649.3 230.9M325.5 221.7L355.0 260.0M566.9 260.8L714.3 231.0M367.3 234.9L385.0 254.7M711.6 261.4L804.3 240.6M420.9 226.1L466.8 266.1M784.9 261.7L873.1 240.8M446.4 221.9L495.6 260.5M812.5 273.7L902.2 251.1M471.2 217.8L523.5 255.2M889.8 274.0L927.0 264.1M520.8 230.6L550.4 250.0M923.5 287.1L927.0 286.1M545.4 226.3L612.4 266.7M569.3 222.1L638.9 261.1M625.8 235.4L664.5 255.7M649.3 230.9L735.8 273.3M672.1 226.5L760.8 267.4M758.4 235.7L866.6 280.2M780.0 231.1L889.8 274.0M852.2 245.8L927.0 273.5M873.1 240.8L927.0 259.9"/>
<path stroke="#606060" stroke-opacity="0.36" d="M37.9 288.8L16.4 353.0M113.5 276.4L108.1 335.3M149.2 270.5L150.9 327.1M183.7 264.9L191.9 319.1M217.0 259.5L231.3 311.6M0.0 308.3L220.1 270.9M258.2 277.1L269.0 304.3M0.0 322.8L355.0 260.0M291.7 271.2L305.3 297.3M0.0 338.7L425.0 260.3M323.9 265.5L340.1 290.6M305.3 297.3L495.6 260.5M355.0 260.0L373.6 284.1M384.1 297.8L566.9 260.8M385.0 254.7L430.4 305.4M544.3 298.8L711.6 261.4M466.8 266.1L495.9 291.5M625.7 299.3L784.9 261.7M495.6 260.5L526.7 284.9M708.0 299.9L812.5 273.7M523.5 255.2L595.4 306.5M791.2 300.4L889.8 274.0M550.4 250.0L625.7 299.3M822.9 315.9L923.5 287.1M612.4 266.7L654.9 292.4M911.3 316.6L927.0 311.8M638.9 261.1L735.5 315.3M664.5 255.7L764.0 307.7M735.8 273.3L791.2 300.4M760.8 267.4L885.2 324.7M866.6 280.2L927.0 305.1M889.8 274.0L927.0 288.5"/>
<path stroke="#606060" stroke-opacity="0.39" d="M16.4 353.0L0.0 402.0M108.1 335.3L99.9 423.8M150.9 327.1L153.4 411.1M191.9 319.1L204.1 399.1M231.3 311.6L252.2 387.7M269.0 304.3L297.9 376.9M305.3 297.3L341.4 366.6M340.1 290.6L382.8 356.8M0.0 356.2L305.3 297.3M373.6 284.1L422.4 347.5M0.0 375.4L384.1 297.8M430.4 305.4L460.1 338.5M0.0 420.6L544.3 298.8M495.9 291.5L573.0 358.8M422.4 347.5L625.7 299.3M526.7 284.9L608.6 349.3M514.9 348.4L708.0 299.9M595.4 306.5L700.5 381.6M608.6 349.3L791.2 300.4M625.7 299.3L735.1 371.0M634.8 369.9L822.9 315.9M654.9 292.4L845.6 407.7M735.1 371.0L911.3 316.6M735.5 315.3L927.0 422.6M770.7 394.2L927.0 341.9M764.0 307.7L927.0 393.0M878.7 395.6L927.0 377.9M791.2 300.4L927.0 366.9M926.0 422.1L927.0 421.6M885.2 324.7L927.0 343.9"/>
<path stroke="#606060" stroke-opacity="0.42" d="M99.9 423.8L86.3 571.0M153.4 411.1L158.1 571.0M204.1 399.1L230.2 571.0M252.2 387.7L302.5 571.0M297.9 376.9L375.1 571.0M341.4 366.6L448.0 571.0M382.8 356.8L521.1 571.0M422.4 347.5L594.5 571.0M460.1 338.5L668.2 571.0M573.0 358.8L816.4 571.0M0.0 447.4L422.4 347.5M608.6 349.3L890.9 571.0M0.0 477.6L514.9 348.4M700.5 381.6L927.0 543.4M0.0 512.1L608.6 349.3M735.1 371.0L927.0 496.6M0.0 551.7L634.8 369.9M845.6 407.7L927.0 456.8M86.8 571.0L735.1 371.0M242.1 571.0L770.7 394.2M398.7 571.0L878.7 395.6M556.4 571.0L926.0 422.1M875.7 571.0L927.0 544.9"/>
<path stroke="#646464" stroke-opacity="0.15" d="M0.0 60.9L32.0 59.2M866.1 47.0L921.6 42.8M37.6 55.3L32.0 59.2M921.6 42.8L927.0 43.2"/>
<path stroke="#646464" stroke-opacity="0.18" d="M32.0 59.2L125.2 54.4M0.0 69.6L303.7 52.6M408.6 55.6L522.9 48.6M604.2 53.7L737.5 44.6M737.4 56.9L866.1 47.0M889.6 60.6L927.0 57.3M32.0 59.2L11.2 74.1M125.2 54.4L122.4 67.6M303.7 52.6L322.6 60.8M394.6 51.7L408.6 55.6M486.6 50.8L505.7 54.6M557.7 46.5L604.2 53.7M647.1 45.6L737.4 56.9M737.5 44.6L927.0 64.6M829.0 43.7L927.0 52.5"/>
<path stroke="#646464" stroke-opacity="0.21" d="M0.0 80.5L408.6 55.6M294.5 74.7L604.2 53.7M578.5 69.1L737.4 56.9M737.3 74.3L889.6 60.6M923.7 80.4L927.0 80.0M11.2 74.1L0.0 82.0M122.4 67.6L118.3 86.6M322.6 60.8L346.4 71.2M408.6 55.6L461.6 70.2M505.7 54.6L578.5 69.1M604.2 53.7L737.3 74.3M737.4 56.9L923.7 80.4"/>
<path stroke="#646464" stroke-opacity="0.24" d="M0.0 94.7L294.5 74.7M318.4 89.2L578.5 69.1M645.7 82.5L737.3 74.3M882.1 84.9L923.7 80.4M118.3 86.6L116.5 95.0M346.4 71.2L377.4 84.6M461.6 70.2L510.3 83.6M578.5 69.1L645.7 82.5M737.3 74.3L837.3 89.8"/>
<path stroke="#646464" stroke-opacity="0.27" d="M255.3 94.0L318.4 89.2M595.0 87.1L645.7 82.5M377.4 84.6L396.6 93.0M510.3 83.6L540.7 92.0M645.7 82.5L687.6 90.9"/>
<path stroke="#686868" stroke-opacity="0.06" d="M439.3 0.0L472.3 2.0M0.0 7.7L293.1 0.0M542.3 1.5L591.0 0.0"/>
<path stroke="#686868" stroke-opacity="0.09" d="M804.3 11.3L927.0 5.7M472.3 2.0L628.4 11.5M0.0 18.6L542.3 1.5M882.3 0.0L927.0 1.1"/>
<path stroke="#686868" stroke-opacity="0.12" d="M559.3 22.4L804.3 11.3M628.4 11.5L851.5 25.1"/>
<path stroke="#686868" stroke-opacity="0.15" d="M0.0 47.9L559.3 22.4M851.5 25.1L927.0 29.7"/>
<path stroke="#686868" stroke-opacity="0.24" d="M837.3 89.8L882.1 84.9M116.5 95.0L114.4 104.8M837.3 89.8L901.1 99.7M923.7 80.4L927.0 80.8"/>
<path stroke="#686868" stroke-opacity="0.27" d="M0.0 113.6L255.3 94.0M419.3 102.9L595.0 87.1M680.7 106.9L837.3 89.8M925.8 119.0L927.0 118.8M114.4 104.8L111.9 116.6M396.6 93.0L419.3 102.9M540.7 92.0L576.6 101.8M687.6 90.9L796.5 112.6M901.1 99.7L927.0 103.7"/>
<path stroke="#686868" stroke-opacity="0.3" d="M0.0 140.5L419.3 102.9M552.6 120.9L680.7 106.9M869.0 127.1L925.8 119.0M111.9 116.6L105.2 148.2M419.3 102.9L446.4 114.6M576.6 101.8L619.4 113.6M796.5 112.6L927.0 138.7"/>
<path stroke="#686868" stroke-opacity="0.33" d="M398.9 137.7L552.6 120.9M736.8 145.9L869.0 127.1M105.2 148.2L100.4 170.4M446.4 114.6L479.4 128.9M619.4 113.6L736.8 145.9"/>
<path stroke="#686868" stroke-opacity="0.36" d="M0.0 181.3L398.9 137.7M659.3 157.0L736.8 145.9M100.4 170.4L94.2 199.3M479.4 128.9L520.3 146.7M736.8 145.9L820.0 168.9"/>
<path stroke="#686868" stroke-opacity="0.39" d="M474.4 183.4L659.3 157.0M520.3 146.7L572.5 169.4M820.0 168.9L927.0 198.3"/>
<path stroke="#686868" stroke-opacity="0.42" d="M0.0 251.0L474.4 183.4M94.2 199.3L85.8 238.8M572.5 169.4L641.2 199.3"/>
<path stroke="#686868" stroke-opacity="0.45" d="M85.8 238.8L73.6 295.8M641.2 199.3L736.1 240.5"/>
<path stroke="#686868" stroke-opacity="0.48" d="M73.6 295.8L54.4 385.2M736.1 240.5L927.0 323.4"/>
<path stroke="#686868" stroke-opacity="0.54" d="M54.4 385.2L20.0 546.0M733.8 562.8L927.0 475.9"/>
<path stroke="#686868" stroke-opacity="0.57" d="M20.0 546.0L14.7 571.0M715.5 571.0L733.8 562.8"/>
<path stroke="#a6384c" stroke-opacity="0.04" stroke-width="1.85" d="M159.3 0.0L160.9 1.5"/>
<path stroke="#a6384c" stroke-opacity="0.08" stroke-width="1.85" d="M160.9 1.5L164.8 5.4"/>
<path stroke="#a6384c" stroke-opacity="0.12" stroke-width="1.85" d="M164.8 5.4L172.4 12.9"/>
<path stroke="#a6384c" stroke-opacity="0.16" stroke-width="1.85" d="M172.4 12.9L181.8 22.0"/>
<path stroke="#a6384c" stroke-opacity="0.2" stroke-width="1.85" d="M181.8 22.0L191.5 31.5"/>
<path stroke="#a6384c" stroke-opacity="0.24" stroke-width="1.85" d="M191.5 31.5L201.4 41.3"/>
<path stroke="#a6384c" stroke-opacity="0.28" stroke-width="1.85" d="M201.4 41.3L211.0 50.7"/>
<path stroke="#a6384c" stroke-opacity="0.32" stroke-width="1.85" d="M211.0 50.7L221.4 60.9"/>
<path stroke="#a6384c" stroke-opacity="0.36" stroke-width="1.85" d="M221.4 60.9L231.8 71.0"/>
<path stroke="#a6384c" stroke-opacity="0.4" stroke-width="1.85" d="M231.8 71.0L243.7 82.6"/>
<path stroke="#a6384c" stroke-opacity="0.44" stroke-width="1.85" d="M243.7 82.6L255.3 94.0"/>
<path stroke="#a6384c" stroke-opacity="0.48" stroke-width="1.85" d="M255.3 94.0L265.3 103.9"/>
<path stroke="#a6384c" stroke-opacity="0.52" stroke-width="1.85" d="M265.3 103.9L277.3 115.6"/>
<path stroke="#a6384c" stroke-opacity="0.56" stroke-width="1.85" d="M277.3 115.6L291.8 129.8"/>
<path stroke="#a6384c" stroke-opacity="0.6" stroke-width="1.85" d="M291.8 129.8L305.9 143.6"/>
<path stroke="#a6384c" stroke-opacity="0.64" stroke-width="1.85" d="M305.9 143.6L318.3 155.8"/>
<path stroke="#a6384c" stroke-opacity="0.68" stroke-width="1.85" d="M318.3 155.8L338.1 175.1"/>
<path stroke="#a6384c" stroke-opacity="0.72" stroke-width="1.85" d="M338.1 175.1L356.0 192.7"/>
<path stroke="#a6384c" stroke-opacity="0.76" stroke-width="1.85" d="M356.0 192.7L369.9 206.3"/>
<path stroke="#a6384c" stroke-opacity="0.8" stroke-width="1.85" d="M369.9 206.3L394.5 230.4"/>
<path stroke="#a6384c" stroke-opacity="0.84" stroke-width="1.85" d="M394.5 230.4L425.0 260.3"/>
<path stroke="#a6384c" stroke-opacity="0.88" stroke-width="1.85" d="M425.0 260.3L463.8 298.3"/>
<path stroke="#a6384c" stroke-opacity="0.92" stroke-width="1.85" d="M463.8 298.3L514.9 348.4"/>
<path stroke="#a6384c" stroke-opacity="0.96" stroke-width="1.85" d="M514.9 348.4L614.9 446.3"/>
<path stroke="#a6384c" stroke-opacity="1" stroke-width="1.85" d="M614.9 446.3L742.2 571.0"/>
<path stroke="#658f1e" stroke-opacity="0.68" stroke-width="1.85" d="M913.4 202.8L927.0 199.9"/>
<path stroke="#658f1e" stroke-opacity="0.72" stroke-width="1.85" d="M859.7 214.2L913.4 202.8"/>
<path stroke="#658f1e" stroke-opacity="0.76" stroke-width="1.85" d="M800.8 226.7L859.7 214.2"/>
<path stroke="#658f1e" stroke-opacity="0.8" stroke-width="1.85" d="M713.0 245.4L800.8 226.7"/>
<path stroke="#658f1e" stroke-opacity="0.84" stroke-width="1.85" d="M638.9 261.1L713.0 245.4"/>
<path stroke="#658f1e" stroke-opacity="0.88" stroke-width="1.85" d="M495.9 291.5L638.9 261.1"/>
<path stroke="#658f1e" stroke-opacity="0.92" stroke-width="1.85" d="M0.0 396.8L495.9 291.5"/></svg>
<svg style="left:0;top:0" width="927" height="571" viewBox="9 58 927 571" fill="none">
<path d="M603.5 156.3L584 418.3" stroke="#222" stroke-opacity=".75" stroke-width="1"/>
<circle cx="603.5" cy="156.3" r="12.3" stroke="#111" stroke-width="1.3" stroke-dasharray="3.2 3.25"/>
<circle cx="603.5" cy="156.3" r="8.8" stroke="#111" stroke-width="1.3" stroke-dasharray="2.9 2.63" stroke-dashoffset="1.5"/>
<circle cx="603.5" cy="156.3" r="5.2" stroke="#111" stroke-width="1.1"/>
<path d="M603.5 153.4L606.4 156.3L603.5 159.2L600.6 156.3Z" stroke="#111" stroke-width="1"/>
<g stroke="#000" stroke-width=".9" stroke-linejoin="round"><path d="M222.3 322.2L285.8 331.3L280.4 374L217.1 363.4Z"/><path d="M173.3 343.8L222.3 322.2M173.3 343.8L285.8 331.3M173.3 343.8L280.4 374M173.3 343.8L217.1 363.4"/></g>
<path d="M256.8 296.8L232.3 319.2L275.8 325.6Z" fill="#000"/>
<defs>
<linearGradient id="cgT" x1="0" y1="0" x2="0" y2="1"><stop offset="0" stop-color="#8e8e8e"/><stop offset="1" stop-color="#898989"/></linearGradient>
<linearGradient id="cgL" x1="0" y1="0" x2="0.25" y2="1"><stop offset="0" stop-color="#858585"/><stop offset="0.6" stop-color="#808080"/><stop offset="1" stop-color="#777"/></linearGradient>
<linearGradient id="cgR" x1="0" y1="0" x2="0.2" y2="1"><stop offset="0" stop-color="#787878"/><stop offset="1" stop-color="#6c6c6c"/></linearGradient>
</defs>
<path d="M424.9 316.8L489.8 305L522.2 330.3L452.7 344.5Z" fill="url(#cgT)" stroke="url(#cgT)" stroke-width="1"/>
<path d="M424.9 316.8L452.7 344.5L454.5 411.8L428 379.8Z" fill="url(#cgL)"/>
<path d="M452.7 344.5L522.2 330.3L520.9 395.4L454.5 411.8Z" fill="url(#cgR)"/>
<path d="M424.9 316.8L452.7 344.5L522.2 330.3" stroke="#858585" stroke-width="2.5" stroke-linejoin="round" opacity=".7"/>
<path d="M452.7 344.5L454.5 411.8" stroke="#7a7a7a" stroke-width="2.5" opacity=".8"/>
<path d="M414 368.7L439.6 363.3" stroke="#6a9620" stroke-width="1.8"/>
<path d="M426.2 316.6L488.6 305.2Q490.2 304.8 491.6 305.9L521.3 329.2Q522.5 330.2 522.5 331.8L521.4 394Q521.4 395.6 519.8 396L456.2 411.6Q454.6 412 453.5 410.8L428.6 380.4Q427.6 379.2 427.6 377.6L424.5 318.6Q424.4 316.9 426.2 316.6Z" stroke="#f4a233" stroke-width="2" stroke-linejoin="round"/>
<path d="M500.8 313.6L510.6 310.6L510.9 320L501.4 322.2Z" fill="#e8384f" fill-opacity=".45" stroke="#e8384f" stroke-opacity=".8" stroke-width="1"/>
<path d="M485.4 329.6L490.8 334L490.8 345L485.4 340.4Z" fill="#84c820" fill-opacity=".45" stroke="#84c820" stroke-opacity=".8" stroke-width="1"/>
<path d="M515.2 364.6L522.6 361.6L529.8 364.6L521.6 367.6Z" fill="#2f80ee" fill-opacity=".5" stroke="#2f80ee" stroke-opacity=".8" stroke-width="1"/>
<path d="M472.7 342L471.7 283" stroke="#2f86ee" stroke-width="1.9"/>
<path d="M486.4 353.4L538 342.4" stroke="#7fc31c" stroke-width="1.9"/>
<path d="M482.4 366L505 388.2" stroke="#e8384f" stroke-width="2"/>
<rect x="466.6" y="276.6" width="10.2" height="10.2" rx="3" fill="#2b8cf7"/>
<rect x="536.1" y="336.6" width="10.2" height="10.2" rx="3" fill="#80cc14"/>
<rect x="503.2" y="386.4" width="10.2" height="10.2" rx="3" fill="#f8385c"/>
<circle cx="472.8" cy="356.3" r="90.2" stroke="#e6e6e6" stroke-width="1.8"/>
<circle cx="472.8" cy="356.3" r="14.8" stroke="#ececec" stroke-width="1.8"/>
<circle cx="472.8" cy="356.3" r="10" stroke="#fff" stroke-width="1.3"/>
<circle cx="472.8" cy="356.3" r="10" stroke="#e02020" stroke-width="1.3" stroke-dasharray="3.9 3.954"/>
<path d="M472.8 337.6V350.6M472.8 362V374.8M454.2 360.2L467.2 357.4M478.4 355.2L491.2 352.4M464.4 347.6L469 352.4M476.6 360.2L481.2 365" stroke="#000" stroke-width="1.2"/>
<circle cx="472.8" cy="356.3" r="2.4" fill="#f5a133" stroke="#c46a10" stroke-width=".6"/>
</svg>
</div>
<div style="left:1px;top:57px;width:927px;height:52px;background:rgba(47,47,47,.78);border-radius:5px 5px 0 0"></div>
<div style="left:9.2px;top:59.5px;width:31.8px;height:20px;background:#272727;border:1px solid #3c3c3c;border-radius:4.5px;"></div>
<svg style="left:14px;top:61px;" width="16" height="16" viewBox="0 0 16 16"><g fill="none" stroke="#dcdcdc" stroke-width="1.1"><path d="M0.9 7.7H14M0.4 11.5H13.7M4.9 5L3.5 14.7M10.5 8L11.6 14.7"/></g><circle cx="10.5" cy="4.5" r="3.5" fill="#dcdcdc"/><path d="M8.5 3.7A2.3 2.3 0 0 1 10.7 2.1" stroke="#282828" stroke-width=".8" fill="none"/></svg>
<svg style="left:31.1px;top:68.3px;" width="7" height="3.6" viewBox="0 0 7 3.6"><path d="M0.6 0.3L3.5 3.2L6.4 0.3" fill="none" stroke="#d0d0d0" stroke-width="1.2" stroke-linecap="round" stroke-linejoin="round"/></svg>
<div style="left:46.2px;top:59.5px;width:109.4px;height:20px;background:#272727;border:1px solid #3c3c3c;border-radius:4.5px;"></div>
<svg style="left:51.4px;top:62.4px;" width="14" height="14" viewBox="0 0 14 14"><g fill="none" stroke="#dcdcdc" stroke-width="1.2"><path d="M0.6 4V0.6H4M10 0.6H13.4V4M13.4 10V13.4H10M4 13.4H0.6V10"/></g><rect x="3.4" y="3.4" width="7.2" height="7.2" fill="#dcdcdc"/></svg>
<span class="t" style="left:72px;top:62.5px;">物体模式</span>
<svg style="left:145.1px;top:68.3px;" width="7" height="3.6" viewBox="0 0 7 3.6"><path d="M0.6 0.3L3.5 3.2L6.4 0.3" fill="none" stroke="#d0d0d0" stroke-width="1.2" stroke-linecap="round" stroke-linejoin="round"/></svg>
<span class="t" style="left:167.8px;top:62.5px;">视图</span>
<span class="t" style="left:205.4px;top:62.5px;">选择</span>
<span class="t" style="left:242.4px;top:62.5px;">添加</span>
<span class="t" style="left:279.2px;top:62.5px;">物体</span>
<div style="left:338.1px;top:59.5px;width:79.7px;height:20px;background:#272727;border:1px solid #3c3c3c;border-radius:4.5px;"></div>
<svg style="left:343px;top:62px;" width="15" height="15" viewBox="0 0 15 15"><g fill="none" stroke="#dcdcdc" stroke-width="1.1" stroke-linecap="round" stroke-linejoin="round"><path d="M3 11.8V1.4M0.8 3.6L3 1.2L5.2 3.6M3.4 12H13.6M11.4 9.8L13.8 12L11.4 14.2M3.6 11.2L9.6 4.6"/><circle cx="2.9" cy="12.1" r="1.7" fill="#282828"/></g></svg>
<span class="t" style="left:364.4px;top:62.5px;">全局</span>
<svg style="left:407.5px;top:68.3px;" width="7" height="3.6" viewBox="0 0 7 3.6"><path d="M0.6 0.3L3.5 3.2L6.4 0.3" fill="none" stroke="#d0d0d0" stroke-width="1.2" stroke-linecap="round" stroke-linejoin="round"/></svg>
<div style="left:423.3px;top:59.5px;width:31.3px;height:20px;background:#272727;border:1px solid #3c3c3c;border-radius:4.5px;"></div>
<svg style="left:427.6px;top:62.2px;" width="15" height="15" viewBox="0 0 15 15"><g fill="none" stroke="#dcdcdc" stroke-width="1.2"><circle cx="9.4" cy="5.4" r="4.2"/><circle cx="5.4" cy="10" r="4.2"/></g><circle cx="7.4" cy="7.7" r="1.2" fill="#dcdcdc"/></svg>
<svg style="left:444.9px;top:68.3px;" width="7" height="3.6" viewBox="0 0 7 3.6"><path d="M0.6 0.3L3.5 3.2L6.4 0.3" fill="none" stroke="#d0d0d0" stroke-width="1.2" stroke-linecap="round" stroke-linejoin="round"/></svg>
<div style="left:460.7px;top:60px;width:50.5px;height:19px;background:#272727;border:1px solid #3c3c3c;border-radius:4.5px"></div>
<div style="left:460.7px;top:60px;width:18.6px;height:19px;background:#545454;border:1px solid #5c5c5c;border-radius:4px 0 0 4px"></div>
<svg style="left:462.6px;top:61.6px;" width="15" height="15" viewBox="0 0 15 15"><g transform="translate(7.9 7.2) rotate(45)" fill="none"><path d="M-3.3 5.4V0A3.3 3.3 0 0 1 3.3 0V5.4" stroke="#b6b6b6" stroke-width="3.6"/><path d="M-3.3 4.4V0A3.3 3.3 0 0 1 3.3 0V4.4" stroke="#545454" stroke-width="1.5"/></g></svg>
<svg style="left:482.6px;top:62.4px;" width="15" height="14" viewBox="0 0 15 14"><g stroke="#dcdcdc" stroke-width="1.1" fill="none"><path d="M0.6 9.6H13.4M0.6 6.4V12.8M4.9 7.6V11.6M9.1 7.6V11.6M13.4 6.4V12.8"/></g><rect x="10.4" y="0.4" width="3.6" height="3.6" fill="#dcdcdc"/></svg>
<svg style="left:501.9px;top:68.3px;" width="7" height="3.6" viewBox="0 0 7 3.6"><path d="M0.6 0.3L3.5 3.2L6.4 0.3" fill="none" stroke="#d0d0d0" stroke-width="1.2" stroke-linecap="round" stroke-linejoin="round"/></svg>
<div style="left:517.7px;top:60px;width:50.9px;height:19px;background:#2e2e2e;border:1px solid #383838;border-radius:4px"></div>
<div style="left:517.7px;top:60px;width:18.4px;height:19px;background:#4a4a4a;border:1px solid #525252;border-radius:4px 0 0 4px"></div>
<svg style="left:520.2px;top:62.8px;" width="14" height="14" viewBox="0 0 14 14"><circle cx="7" cy="7" r="5.6" fill="none" stroke="#9c9c9c" stroke-width="1.1"/><circle cx="7" cy="7" r="2" fill="#b4b4b4"/></svg>
<svg style="left:540px;top:63px;" width="16" height="13" viewBox="0 0 16 13"><path d="M0.8 12.2C5 12.2 5 0.8 7.6 0.8C10.2 0.8 10.2 12.2 14.6 12.2" fill="none" stroke="#9a9a9a" stroke-width="1.1"/></svg>
<svg style="left:558.9px;top:68.3px;" width="7" height="3.6" viewBox="0 0 7 3.6"><path d="M0.6 0.3L3.5 3.2L6.4 0.3" fill="none" stroke="#5a5a5a" stroke-width="1.2" stroke-linecap="round" stroke-linejoin="round"/></svg>
<div style="left:672.4px;top:59.5px;width:31.2px;height:20px;background:#272727;border:1px solid #3c3c3c;border-radius:4.5px;"></div>
<svg style="left:675px;top:61px;" width="17" height="17" viewBox="0 0 17 17"><path d="M0.6 6.6L1.2 15L3.6 12.8L5.6 16.4L7.2 15.6L5.4 12L8.6 11.6Z" fill="#dcdcdc"/><path d="M3.6 4.6C5.6 0.8 12.6 0.8 14.8 4.6C12.6 8.4 5.6 8.4 3.6 4.6Z" fill="#dcdcdc"/><circle cx="9.2" cy="4.4" r="2.1" fill="#272727"/><circle cx="9.2" cy="4.4" r="0.9" fill="#dcdcdc"/></svg>
<svg style="left:693.3px;top:68.3px;" width="7" height="3.6" viewBox="0 0 7 3.6"><path d="M0.6 0.3L3.5 3.2L6.4 0.3" fill="none" stroke="#d0d0d0" stroke-width="1.2" stroke-linecap="round" stroke-linejoin="round"/></svg>
<div style="left:709.1px;top:59.5px;width:39.4px;height:20px;background:#272727;border:1px solid #3c3c3c;border-radius:4.5px;"></div>
<div style="left:709.7px;top:60px;width:18.6px;height:19px;background:#4772b3;border:1px solid #5580c0;border-radius:4px 0 0 4px"></div>
<svg style="left:711.6px;top:62px;" width="15" height="15" viewBox="0 0 15 15"><g fill="none" stroke="#fff" stroke-width="1.15" stroke-linecap="round"><path d="M1.4 3C7.4 2.6 12 6.8 12.6 13.6"/><path d="M4.4 11L12.4 2.6M8.2 2.2H12.8V6.8"/><circle cx="3.2" cy="12.2" r="1.7"/></g></svg>
<svg style="left:734.5px;top:68.3px;" width="7" height="3.6" viewBox="0 0 7 3.6"><path d="M0.6 0.3L3.5 3.2L6.4 0.3" fill="none" stroke="#d0d0d0" stroke-width="1.2" stroke-linecap="round" stroke-linejoin="round"/></svg>
<div style="left:754.1px;top:59.5px;width:39.3px;height:20px;background:#272727;border:1px solid #3c3c3c;border-radius:4.5px;"></div>
<div style="left:754.7px;top:60px;width:18.4px;height:19px;background:#4772b3;border:1px solid #5580c0;border-radius:4px 0 0 4px"></div>
<svg style="left:756.8px;top:62.2px;" width="15" height="15" viewBox="0 0 15 15"><circle cx="5.6" cy="9" r="4.8" fill="none" stroke="#fff" stroke-width="1.15"/><circle cx="8.6" cy="6" r="5" fill="#fff"/><path d="M8.4 6.2A4.6 4.6 0 0 1 4.4 11.2" fill="none" stroke="#4772b3" stroke-width="1"/></svg>
<svg style="left:779.7px;top:68.3px;" width="7" height="3.6" viewBox="0 0 7 3.6"><path d="M0.6 0.3L3.5 3.2L6.4 0.3" fill="none" stroke="#d0d0d0" stroke-width="1.2" stroke-linecap="round" stroke-linejoin="round"/></svg>
<div style="left:799.2px;top:59.6px;width:18.8px;height:19.8px;background:#545454;border:1px solid #5e5e5e;border-radius:4.5px"></div>
<svg style="left:802px;top:62.6px;" width="14" height="14" viewBox="0 0 14 14"><g fill="none" stroke="#dcdcdc" stroke-width="1.1"><path d="M3.4 3.2V0.8H13V10.4H10.6"/><rect x="0.8" y="3.4" width="9.6" height="9.6"/><path d="M3.8 8.6V10.2H5.4M7.4 6.4V8" stroke-dasharray="1.2 1"/></g></svg>
<div style="left:824.9px;top:60px;width:95.2px;height:19px;background:#545454;border:1px solid #5a5a5a;border-radius:4px"></div>
<div style="left:844px;top:60px;width:18.6px;height:19px;background:#4772b3;border:1px solid #5580c0"></div>
<div style="left:900.6px;top:60px;width:19.5px;height:19px;background:#282828;border:1px solid #3a3a3a;border-radius:0 4px 4px 0"></div>
<div style="left:843.4px;top:61px;width:1px;height:17px;background:#3a3a3a"></div>
<div style="left:881.4px;top:61px;width:1px;height:17px;background:#3a3a3a"></div>
<svg style="left:827.4px;top:62.6px;" width="14" height="14" viewBox="0 0 14 14"><g fill="none" stroke="#e6e6e6" stroke-width="1"><circle cx="7" cy="7" r="6"/><ellipse cx="7" cy="7" rx="2.8" ry="6"/><path d="M1 7H13"/></g></svg>
<svg style="left:846.2px;top:62.6px;" width="14" height="14" viewBox="0 0 14 14"><circle cx="7" cy="7" r="6.4" fill="#fff"/></svg>
<svg style="left:865px;top:62.6px;" width="14" height="14" viewBox="0 0 14 14"><circle cx="7" cy="7" r="6" fill="none" stroke="#e6e6e6" stroke-width="1"/><path d="M7 1A6 6 0 0 0 7 13Z" fill="#d2d2d2"/><path d="M7 7H13A6 6 0 0 1 7 13Z" fill="#8e8e8e"/><path d="M7 1.4V7H12.6" fill="none" stroke="#545454" stroke-width=".8"/></svg>
<svg style="left:884px;top:62.6px;" width="14" height="14" viewBox="0 0 14 14"><circle cx="7" cy="7" r="6" fill="none" stroke="#e6e6e6" stroke-width="1"/><circle cx="7" cy="7" r="4.3" fill="none" stroke="#bdbdbd" stroke-width="1"/><path d="M3.6 6.4A3.6 3.6 0 0 1 6.4 3.4" stroke="#fff" stroke-width="1.2" fill="none"/></svg>
<svg style="left:906.9px;top:68.3px;" width="7" height="3.6" viewBox="0 0 7 3.6"><path d="M0.6 0.3L3.5 3.2L6.4 0.3" fill="none" stroke="#d0d0d0" stroke-width="1.2" stroke-linecap="round" stroke-linejoin="round"/></svg>
<span class="t" style="left:45.4px;top:89px;">坐标系:</span>
<div style="left:85.1px;top:86.5px;width:100.1px;height:19.5px;background:#272727;border:1px solid #3c3c3c;border-radius:4.5px;"></div>
<svg style="left:88px;top:88px;" width="16" height="16" viewBox="0 0 16 16"><g fill="none" stroke="#dcdcdc" stroke-width="1" stroke-linecap="round" stroke-linejoin="round"><path d="M6.7 7.6V1.6M4.7 3.6L6.7 1.4L8.7 3.6M9.4 10.3H15.2M13.2 8.3L15.4 10.3L13.2 12.3M4.9 11.7L2.3 14.3M1.7 12.5V14.7H3.9"/></g><circle cx="6.7" cy="9.9" r="1.9" fill="#dcdcdc"/></svg>
<span class="t" style="left:111.6px;top:89px;">默认</span>
<svg style="left:174.1px;top:94.9px;" width="7" height="3.6" viewBox="0 0 7 3.6"><path d="M0.6 0.3L3.5 3.2L6.4 0.3" fill="none" stroke="#d0d0d0" stroke-width="1.2" stroke-linecap="round" stroke-linejoin="round"/></svg>
<span class="t" style="left:194.4px;top:89px;">拖动 :</span>
<div style="left:235.9px;top:86.5px;width:78px;height:19.5px;background:#272727;border:1px solid #3c3c3c;border-radius:4.5px;"></div>
<span class="t" style="left:244px;top:90px;letter-spacing:.16px;">Select Box</span>
<svg style="left:302.9px;top:94.9px;" width="7" height="3.6" viewBox="0 0 7 3.6"><path d="M0.6 0.3L3.5 3.2L6.4 0.3" fill="none" stroke="#d0d0d0" stroke-width="1.2" stroke-linecap="round" stroke-linejoin="round"/></svg>
<div style="left:875.8px;top:86.5px;width:46px;height:19.5px;background:#272727;border:1px solid #3c3c3c;border-radius:4.5px;"></div>
<span class="t" style="left:883.2px;top:89px;">选项</span>
<svg style="left:910.9px;top:94.9px;" width="7" height="3.6" viewBox="0 0 7 3.6"><path d="M0.6 0.3L3.5 3.2L6.4 0.3" fill="none" stroke="#d0d0d0" stroke-width="1.2" stroke-linecap="round" stroke-linejoin="round"/></svg>
<div style="left:9px;top:117px;width:40px;height:67.6px;background:rgba(40,40,40,.93);border-radius:4.5px"></div>
<div style="left:9px;top:150.3px;width:40px;height:1px;background:#3a3a3a"></div>
<div style="left:9px;top:192px;width:40px;height:137.6px;background:rgba(40,40,40,.93);border-radius:4.5px"></div>
<div style="left:9px;top:225.9px;width:40px;height:1px;background:#3a3a3a"></div>
<div style="left:9px;top:260.3px;width:40px;height:1px;background:#3a3a3a"></div>
<div style="left:9px;top:294.7px;width:40px;height:1px;background:#3a3a3a"></div>
<div style="left:9px;top:260.8px;width:40px;height:34.2px;background:#4772b3"></div>
<div style="left:9px;top:337px;width:40px;height:67.8px;background:rgba(40,40,40,.93);border-radius:4.5px"></div>
<div style="left:9px;top:370.4px;width:40px;height:1px;background:#3a3a3a"></div>
<div style="left:9px;top:412px;width:40px;height:32.8px;background:rgba(40,40,40,.93);border-radius:4.5px"></div>
<svg style="left:16px;top:121px;" width="26" height="26" viewBox="0 0 26 26"><rect x="1.9" y="1.7" width="20.6" height="20.6" fill="none" stroke="#e6b552" stroke-width="1.3" stroke-dasharray="3.3 1.75" stroke-dashoffset="1.2"/><path d="M8.6 7L17.2 14.2L9.2 17.2Z" fill="#e2e2e2"/></svg>
<svg style="left:44.2px;top:145px;" width="3.4" height="3.4" viewBox="0 0 3.4 3.4"><path d="M3.4 0V3.4H0Z" fill="#858585"/></svg>
<svg style="left:14px;top:153.6px;" width="28" height="28" viewBox="0 0 28 28"><circle cx="14" cy="14" r="11.2" fill="none" stroke="#f2f2f2" stroke-width="1.5"/><circle cx="14" cy="14" r="11.2" fill="none" stroke="#b84848" stroke-width="1.5" stroke-dasharray="4.4 4.4" stroke-dashoffset="2.2"/><path d="M6.6 14H12M16 14H21.4M14 6.6V12M14 16V21.4" stroke="#8c8c8c" stroke-width="2"/></svg>
<svg style="left:14px;top:194px;" width="28" height="28" viewBox="0 0 28 28"><g fill="#e6e6e6"><path d="M14 2.4L17.4 7.6H10.6Z"/><path d="M14 25.8L17.4 20.6H10.6Z"/><path d="M2.2 14L7.6 10.6V17.4Z"/><path d="M25.8 14L20.4 10.6V17.4Z"/></g><path d="M14 7.6V11M14 17V20.6M7.6 14H11M17 14H20.4" stroke="#e6e6e6" stroke-width="1.6" stroke-dasharray="2.2 1.2"/></svg>
<svg style="left:14px;top:229px;" width="28" height="28" viewBox="0 0 28 28"><g fill="none" stroke="#e6e6e6" stroke-width="1.3"><path d="M5.6 10.6A9.4 9.4 0 0 1 22 9.4"/><path d="M22.4 17.4A9.4 9.4 0 0 1 6.6 19.4"/></g><path d="M1.8 13L8.2 13L5 18.4Z" fill="#e6e6e6"/><path d="M19.6 15L26 15L22.8 9.4Z" fill="#e6e6e6"/><path d="M14 10L18 14L14 18L10 14Z" fill="#a8a8a8"/></svg>
<svg style="left:18px;top:268px;" width="22" height="22" viewBox="0 0 22 22"><path d="M2 9.4V2.2H18.2V17.6H10.4" fill="none" stroke="#b9bcc2" stroke-width="1.2"/><rect x="1" y="10.2" width="8.8" height="8.6" fill="#ececec"/><path d="M10.6 9.2L14 5.8" stroke="#fff" stroke-width="1.3" stroke-dasharray="1.8 1"/><path d="M16.6 3.4L12.2 4.8L15.2 7.8Z" fill="#fff"/></svg>
<svg style="left:44.2px;top:289.2px;" width="3.4" height="3.4" viewBox="0 0 3.4 3.4"><path d="M3.4 0V3.4H0Z" fill="#a9bbd8"/></svg>
<svg style="left:14px;top:298.6px;" width="28" height="28" viewBox="0 0 28 28"><g fill="none" stroke="#e6e6e6" stroke-width="1.2"><path d="M16.4 4.2A10.2 10.2 0 0 1 23.8 11.6M23.8 16.4A10.2 10.2 0 0 1 16.4 23.8M11.6 23.8A10.2 10.2 0 0 1 4.2 16.4M4.2 11.6A10.2 10.2 0 0 1 11.6 4.2"/></g><g fill="#e6e6e6"><rect x="9.8" y="9.8" width="8.4" height="8.4"/><path d="M14 2.6L16.6 6.8H11.4Z"/><path d="M14 25.4L16.6 21.2H11.4Z"/><path d="M2.6 14L6.8 11.4V16.6Z"/><path d="M25.4 14L21.2 11.4V16.6Z"/></g></svg>
<svg style="left:14px;top:340px;" width="28" height="28" viewBox="0 0 28 28"><path d="M3.4 20C7.6 23.4 10.6 20.6 14 17.4C17.8 13.6 21.8 13.6 25.6 19" fill="none" stroke="#8fd8b0" stroke-width="1.4"/><path d="M2.6 18L3.6 14.4L15.4 3L18.2 5.8L6.2 17Z" fill="#e9e9e9"/><path d="M2.6 18L3.3 15.6L5.2 17.3Z" fill="#444"/><path d="M14 4.4L16.8 7.2" stroke="#2a2a2a" stroke-width=".8"/></svg>
<svg style="left:44.2px;top:365.2px;" width="3.4" height="3.4" viewBox="0 0 3.4 3.4"><path d="M3.4 0V3.4H0Z" fill="#858585"/></svg>
<svg style="left:16px;top:374px;" width="26" height="28" viewBox="0 0 26 28"><path d="M8.4 22V11.4A10.6 10.6 0 0 1 19 22Z" fill="#8fe0b4"/><path d="M8.4 9A13 13 0 0 1 21.4 22" fill="none" stroke="#8fe0b4" stroke-width="1.2"/><path d="M3 2.6H8V21H23.6V25H3Z" fill="#ececec"/><path d="M5.6 5H8M5.6 8H8M5.6 11H8M5.6 14H8M5.6 17H8M5.6 20H8M9 22.6V25M12 22.6V25M15 22.6V25M18 22.6V25M21 22.6V25" stroke="#2a2a2a" stroke-width=".9"/></svg>
<svg style="left:14px;top:414px;" width="30" height="28" viewBox="0 0 30 28"><path d="M1.4 6H8.6M5 2.4V9.6" stroke="#7fe0a8" stroke-width="1.8"/><g fill="none" stroke="#86cfa6" stroke-width="1.1" stroke-linejoin="round"><path d="M6.4 12.6L12 7.4H25.6V19.6L20.4 25.6H6.4Z"/><path d="M6.4 12.6H20.4V25.6M20.4 12.6L25.6 7.4"/></g></svg>
<svg style="left:44.2px;top:439.6px;" width="3.4" height="3.4" viewBox="0 0 3.4 3.4"><path d="M3.4 0V3.4H0Z" fill="#858585"/></svg>
<span class="t" style="left:67.3px;top:117.6px;color:#fff;text-shadow:0 0 2px #000,0 1px 1px rgba(0,0,0,.7)">用户透视</span>
<span class="t" style="left:67px;top:135.6px;letter-spacing:.05px;color:#fff;text-shadow:0 0 2px #000,0 1px 1px rgba(0,0,0,.7)">(1) Collection | Cube</span>
<svg style="left:0;top:0" width="1125" height="698" viewBox="8 1 1125 698" fill="none" font-family="'DejaVu Sans','Liberation Sans',sans-serif">
<circle cx="872.8" cy="146" r="7" fill="#c8364c" fill-opacity=".22" stroke="#b4354a" stroke-width="1.3"/>
<circle cx="856.8" cy="165.1" r="7.7" fill="#557a18" fill-opacity=".75" stroke="#86c81c" stroke-width="1.3"/>
<circle cx="886.6" cy="187.6" r="7.1" fill="#2f65b4" fill-opacity=".5" stroke="#2f7be0" stroke-width="1.3"/>
<path d="M885.8 159L885.6 138" stroke="#2b8cf0" stroke-width="2.2"/>
<path d="M885.8 159L908 154.4" stroke="#6fa81c" stroke-width="2.2"/>
<path d="M885.8 159L893.6 166.6" stroke="#e8365a" stroke-width="2.2"/>
<circle cx="885.5" cy="130.1" r="8.6" fill="#2b8cf0"/>
<circle cx="915.3" cy="152.9" r="7.9" fill="#6fa81c"/>
<circle cx="899.2" cy="172" r="8.7" fill="#f5375b"/>
<text x="885.5" y="134" text-anchor="middle" font-size="10.5" fill="#0c2a52">Z</text>
<text x="915.3" y="156.8" text-anchor="middle" font-size="10.5" fill="#1c2c04">Y</text>
<text x="899.2" y="175.9" text-anchor="middle" font-size="10.5" fill="#4a0c18">X</text>
<circle cx="913.9" cy="213.4" r="13.8" fill="#2c2c2c" fill-opacity=".72"/>
<circle cx="913.9" cy="243.7" r="13.8" fill="#2c2c2c" fill-opacity=".72"/>
<circle cx="913.9" cy="274" r="13.8" fill="#2c2c2c" fill-opacity=".72"/>
<circle cx="913.9" cy="304.4" r="13.8" fill="#2c2c2c" fill-opacity=".72"/>
<g stroke="#e8e8e8" fill="none"><circle cx="915.8" cy="212" r="5.6" stroke-width="1.6"/><path d="M911.6 216.4L906.8 221.4" stroke-width="2.2" stroke-linecap="round"/><path d="M912.8 212H918.8M915.8 209V215" stroke-width="1.2"/></g><circle cx="915.8" cy="212" r="4.8" fill="#2f2f2f"/><path d="M912.8 212H918.8M915.8 209V215" stroke="#e8e8e8" stroke-width="1.2"/>
<path d="M909.6 251.4C907.4 249.4 905.8 246.8 905.4 245.4C905.8 244.2 907.4 244.4 908.4 245.6L909.6 247L908.6 239.4C908.6 238 910.4 238 910.6 239.2L911.6 243.6L911.6 237.2C911.8 235.8 913.6 235.8 913.8 237.2L914.2 243.4L915.2 237.8C915.6 236.4 917.4 236.8 917.2 238.2L916.8 244L918.4 240.2C919 239 920.6 239.6 920.2 241L918.8 247.4C918.6 249.6 917.8 250.8 916.6 251.8Z" fill="#e8e8e8"/>
<g fill="#e8e8e8"><circle cx="909.8" cy="269.4" r="3.3"/><circle cx="916.6" cy="269" r="3.7"/><path d="M907.6 272H918.6V280.4H907.6Z"/><path d="M919.2 276.2L923 273.6V279.6Z"/><path d="M905.2 274.6H907V278.6H905.2Z"/></g><circle cx="909.8" cy="269.4" r="1.1" fill="#2f2f2f"/><circle cx="916.6" cy="269" r="1.3" fill="#2f2f2f"/>
<g stroke="#e8e8e8" stroke-width="1.3" fill="none"><path d="M909.6 298.4H918.4L921.4 310.4H906.4Z"/><path d="M914 298.4V310.4M911.8 298.4L910.2 310.4M916.2 298.4L917.8 310.4M908.6 302.2H919.4M907.6 306H920.4"/></g>
</svg>
<div style="left:920.6px;top:123.6px;width:8.4px;height:13px;background:#2c2c2c;border-radius:3px 0 0 3px"></div>
<svg style="left:922.4px;top:126.4px;" width="4" height="7" viewBox="0 0 4 7"><path d="M3.6 0.4L0.6 3.5L3.6 6.6" fill="none" stroke="#c8c8c8" stroke-width="1.1"/></svg>
<div style="left:931.2px;top:57px;width:192.8px;height:196px;background:#282828;border-radius:5px;overflow:hidden"></div>
<div style="left:931.2px;top:57px;width:192.8px;height:26px;background:#303030;border-radius:5px 5px 0 0"></div>
<div style="left:931.2px;top:103px;width:192.8px;height:20px;background:#2b2b2b"></div>
<div style="left:931.2px;top:143px;width:192.8px;height:20px;background:#2b2b2b"></div>
<div style="left:931.2px;top:183px;width:192.8px;height:20px;background:#2b2b2b"></div>
<div style="left:931.2px;top:223px;width:192.8px;height:20px;background:#2b2b2b"></div>
<div style="left:931.2px;top:143px;width:192.8px;height:20px;background:#334d80"></div>
<div style="left:938.5px;top:59.5px;width:32.9px;height:20px;background:#272727;border:1px solid #3c3c3c;border-radius:4.5px;"></div>
<svg style="left:943.6px;top:62.4px;" width="16" height="15" viewBox="0 0 16 15"><g fill="#dcdcdc"><rect x="0.4" y="0.6" width="5.6" height="3.4"/><rect x="6.6" y="5.6" width="7.4" height="3.2"/><rect x="6.6" y="10.6" width="7.4" height="3.2"/></g><path d="M2.4 4V12.4H6M2.4 7.2H6" fill="none" stroke="#dcdcdc" stroke-width="1.1"/></svg>
<svg style="left:960.9px;top:68.3px;" width="7" height="3.6" viewBox="0 0 7 3.6"><path d="M0.6 0.3L3.5 3.2L6.4 0.3" fill="none" stroke="#d0d0d0" stroke-width="1.2" stroke-linecap="round" stroke-linejoin="round"/></svg>
<div style="left:975.9px;top:59.5px;width:32.3px;height:20px;background:#272727;border:1px solid #3c3c3c;border-radius:4.5px;"></div>
<svg style="left:980.6px;top:61.8px;" width="16" height="16" viewBox="0 0 16 16"><g fill="none" stroke="#d8d8d8" stroke-width="1.1"><path d="M2.6 4.2V12.4H11.4"/><path d="M0.8 6V14H9.6" /></g><rect x="4.6" y="1.6" width="9.6" height="8.6" fill="none" stroke="#d8d8d8" stroke-width="1.2"/><path d="M5.4 9.4L8.4 5.4L10.4 7.8L11.6 6.8L13.4 9.4Z" fill="#d8d8d8"/><circle cx="11.8" cy="4" r="0.9" fill="#d8d8d8"/></svg>
<svg style="left:997.7px;top:68.3px;" width="7" height="3.6" viewBox="0 0 7 3.6"><path d="M0.6 0.3L3.5 3.2L6.4 0.3" fill="none" stroke="#d0d0d0" stroke-width="1.2" stroke-linecap="round" stroke-linejoin="round"/></svg>
<div style="left:1023.9px;top:59.5px;width:105.1px;height:20px;background:#1d1d1d;border:1px solid #3d3d3d;border-radius:4px 0 0 4px"></div>
<svg style="left:1028.4px;top:61.6px;" width="16" height="16" viewBox="0 0 16 16"><circle cx="9.8" cy="5.8" r="4.4" fill="none" stroke="#dcdcdc" stroke-width="1.3"/><path d="M6.6 9L1.2 14.6" stroke="#dcdcdc" stroke-width="1.5" stroke-linecap="round"/></svg>
<svg style="left:954px;top:87.2px;" width="14" height="13.4" viewBox="0 0 14 13.4"><path d="M0.6 0.8H13.4V4.4H0.6Z" fill="#e0e0e0"/><path d="M1.4 5.4H12.6V13H1.4Z" fill="#e0e0e0"/><rect x="4.6" y="6.8" width="4.8" height="2" fill="#282828"/></svg>
<span class="t" style="left:975.6px;top:87px;color:#c8c8c8">场景集合</span>
<svg style="left:957.4px;top:110.8px;" width="6.4" height="6" viewBox="0 0 6.4 6"><path d="M0.2 0.4H6.2L3.2 5.8Z" fill="#c8c8c8"/></svg>
<div style="left:971.2px;top:104px;width:20px;height:17.6px;background:#4c4c4c;border:1px solid #727272;border-radius:4px"></div>
<svg style="left:974.2px;top:106.4px;" width="14" height="13.4" viewBox="0 0 14 13.4"><path d="M0.6 0.8H13.4V4.4H0.6Z" fill="#e6e6e6"/><path d="M1.4 5.4H12.6V13H1.4Z" fill="#e6e6e6"/><rect x="4.6" y="6.8" width="4.8" height="2" fill="#4c4c4c"/></svg>
<span class="t" style="left:995.4px;top:107.9px;letter-spacing:.16px;color:#dcdcdc">Collection</span>
<div style="left:1061.8px;top:108px;width:10.4px;height:10.4px;background:#e6e6e6;border-radius:1.5px"></div>
<svg style="left:1061.8px;top:108px;" width="10.4" height="10.4" viewBox="0 0 10.4 10.4"><path d="M2 5.4L4.4 7.8L8.6 2.6" fill="none" stroke="#222" stroke-width="1.5"/></svg>
<svg style="left:1080.2px;top:108.4px;" width="13" height="9" viewBox="0 0 13 9"><path d="M0.4 4.4C3.2 -0.8 9.8 -0.8 12.6 4.4C9.8 9.6 3.2 9.6 0.4 4.4Z" fill="#e6e6e6"/><circle cx="6.5" cy="4.2" r="2.9" fill="#2b2b2b"/><circle cx="6.5" cy="4.2" r="1.5" fill="#e6e6e6"/></svg>
<svg style="left:1100px;top:107.4px;" width="13.2" height="11" viewBox="0 0 13.2 11"><path d="M0.4 2.4H3.4L4.6 0.6H8.6L9.8 2.4H12.8V10.6H0.4Z" fill="#e6e6e6"/><circle cx="6.6" cy="6.2" r="3.3" fill="#2b2b2b"/><circle cx="6.6" cy="6.2" r="2.2" fill="none" stroke="#e6e6e6" stroke-width="1"/></svg>
<svg style="left:1080.2px;top:128.6px;" width="13" height="9" viewBox="0 0 13 9"><path d="M0.4 4.4C3.2 -0.8 9.8 -0.8 12.6 4.4C9.8 9.6 3.2 9.6 0.4 4.4Z" fill="#e6e6e6"/><circle cx="6.5" cy="4.2" r="2.9" fill="#282828"/><circle cx="6.5" cy="4.2" r="1.5" fill="#e6e6e6"/></svg>
<svg style="left:1100px;top:127.6px;" width="13.2" height="11" viewBox="0 0 13.2 11"><path d="M0.4 2.4H3.4L4.6 0.6H8.6L9.8 2.4H12.8V10.6H0.4Z" fill="#e6e6e6"/><circle cx="6.6" cy="6.2" r="3.3" fill="#282828"/><circle cx="6.6" cy="6.2" r="2.2" fill="none" stroke="#e6e6e6" stroke-width="1"/></svg>
<svg style="left:1080.2px;top:148.4px;" width="13" height="9" viewBox="0 0 13 9"><path d="M0.4 4.4C3.2 -0.8 9.8 -0.8 12.6 4.4C9.8 9.6 3.2 9.6 0.4 4.4Z" fill="#e6e6e6"/><circle cx="6.5" cy="4.2" r="2.9" fill="#334d80"/><circle cx="6.5" cy="4.2" r="1.5" fill="#e6e6e6"/></svg>
<svg style="left:1100px;top:147.4px;" width="13.2" height="11" viewBox="0 0 13.2 11"><path d="M0.4 2.4H3.4L4.6 0.6H8.6L9.8 2.4H12.8V10.6H0.4Z" fill="#e6e6e6"/><circle cx="6.6" cy="6.2" r="3.3" fill="#334d80"/><circle cx="6.6" cy="6.2" r="2.2" fill="none" stroke="#e6e6e6" stroke-width="1"/></svg>
<svg style="left:1080.2px;top:168.4px;" width="13" height="9" viewBox="0 0 13 9"><path d="M0.4 4.4C3.2 -0.8 9.8 -0.8 12.6 4.4C9.8 9.6 3.2 9.6 0.4 4.4Z" fill="#e6e6e6"/><circle cx="6.5" cy="4.2" r="2.9" fill="#282828"/><circle cx="6.5" cy="4.2" r="1.5" fill="#e6e6e6"/></svg>
<svg style="left:1100px;top:167.4px;" width="13.2" height="11" viewBox="0 0 13.2 11"><path d="M0.4 2.4H3.4L4.6 0.6H8.6L9.8 2.4H12.8V10.6H0.4Z" fill="#e6e6e6"/><circle cx="6.6" cy="6.2" r="3.3" fill="#282828"/><circle cx="6.6" cy="6.2" r="2.2" fill="none" stroke="#e6e6e6" stroke-width="1"/></svg>
<div style="left:960px;top:128px;width:1px;height:50px;background:#585858"></div>
<svg style="left:978px;top:130px;" width="6" height="6.4" viewBox="0 0 6 6.4"><path d="M0.3 0.2L5.8 3.2L0.3 6.2Z" fill="#c8c8c8"/></svg>
<svg style="left:978px;top:149.8px;" width="6" height="6.4" viewBox="0 0 6 6.4"><path d="M0.3 0.2L5.8 3.2L0.3 6.2Z" fill="#c8c8c8"/></svg>
<svg style="left:978px;top:169.8px;" width="6" height="6.4" viewBox="0 0 6 6.4"><path d="M0.3 0.2L5.8 3.2L0.3 6.2Z" fill="#c8c8c8"/></svg>
<svg style="left:993px;top:126px;" width="16" height="15" viewBox="0 0 16 15"><g fill="#df8c52"><circle cx="3.8" cy="3.8" r="3.4"/><circle cx="10.4" cy="3.4" r="3.9"/><path d="M2.4 6.6H12.4V13.4H2.4Z"/><path d="M12.8 10L15.6 8V13.2L12.8 11.4Z"/><path d="M0.4 8.6H2.6V12H0.4Z"/></g><circle cx="3.8" cy="3.8" r="1.1" fill="#282828"/><circle cx="10.4" cy="3.4" r="1.3" fill="#282828"/></svg>
<span class="t" style="left:1015.5px;top:127.7px;letter-spacing:.16px;color:#dcdcdc">Camera</span>
<div style="left:991.3px;top:144.2px;width:19.4px;height:17.6px;background:#5a6f9a;border:1px solid #7b8db3;border-radius:4px"></div>
<svg style="left:994px;top:146.6px;" width="14" height="13" viewBox="0 0 14 13"><path d="M1.2 1.2H12.8L7 11.8Z" fill="none" stroke="#df8c52" stroke-width="2.3" stroke-linejoin="round"/></svg>
<span class="t" style="left:1015.5px;top:147.5px;letter-spacing:.16px;color:#f0a92e">Cube</span>
<svg style="left:994.4px;top:164.6px;" width="13" height="17" viewBox="0 0 13 17"><path d="M6.5 0.6A5.9 5.9 0 0 1 9.8 11.2V12.6H3.2V11.2A5.9 5.9 0 0 1 6.5 0.6Z" fill="#df8c52"/><path d="M3.6 13.8H9.4M4.6 15.8H8.4" stroke="#df8c52" stroke-width="1.2"/><path d="M4 5.4H9M4.8 5.4V8M8.2 5.4V8" stroke="#282828" stroke-width="1" fill="none"/></svg>
<span class="t" style="left:1015.5px;top:167.4px;letter-spacing:.16px;color:#dcdcdc">Light</span>
<div style="left:931.2px;top:256.2px;width:192.8px;height:420.8px;background:#303030;border-radius:5px;overflow:hidden"></div>
<div style="left:931.2px;top:281px;width:27.8px;height:396px;background:#1e1e1e;border-radius:0 0 0 5px"></div>
<div style="left:931.2px;top:281px;width:27.8px;height:36.4px;background:#1c1c1c"></div>
<div style="left:933.2px;top:317px;width:25.8px;height:1px;background:#272727"></div>
<div style="left:933.2px;top:510.2px;width:26px;height:25.4px;background:#303030;border-radius:4px 0 0 4px"></div>
<div style="left:939.1px;top:258px;width:32.1px;height:20px;background:#272727;border:1px solid #3c3c3c;border-radius:4.5px;"></div>
<svg style="left:944.4px;top:261px;" width="14" height="14" viewBox="0 0 14 14"><g fill="#e0e0e0"><rect x="0.4" y="0.8" width="12.8" height="5.6" rx="2.8"/><rect x="0.4" y="7.8" width="12.8" height="5.6" rx="2.8"/></g><circle cx="9.8" cy="3.6" r="1.9" fill="#282828"/><circle cx="3.8" cy="10.6" r="1.9" fill="#282828"/><rect x="1.6" y="1.8" width="6" height="3.6" rx="1.8" fill="#e0e0e0"/></svg>
<svg style="left:960.9px;top:266.7px;" width="7" height="3.6" viewBox="0 0 7 3.6"><path d="M0.6 0.3L3.5 3.2L6.4 0.3" fill="none" stroke="#d0d0d0" stroke-width="1.2" stroke-linecap="round" stroke-linejoin="round"/></svg>
<div style="left:992.1px;top:258px;width:110.8px;height:20px;background:#1d1d1d;border:1px solid #3d3d3d;border-radius:4px"></div>
<svg style="left:996.6px;top:260.2px;" width="16" height="16" viewBox="0 0 16 16"><circle cx="9.8" cy="5.8" r="4.4" fill="none" stroke="#dcdcdc" stroke-width="1.3"/><path d="M6.6 9L1.2 14.6" stroke="#dcdcdc" stroke-width="1.5" stroke-linecap="round"/></svg>
<div style="left:1120px;top:258.5px;width:10px;height:19px;background:#272727;border:1px solid #3c3c3c;border-radius:4.5px"></div>
<svg style="left:938.6px;top:296px;" width="15" height="14.4" viewBox="0 0 15 14.4"><g fill="#a0a0a0"><path d="M2.7 0.2H3.7V7H2.7Z"/><ellipse cx="3.2" cy="10.4" rx="2.5" ry="3.5"/><path d="M7.4 0.6C7.4 0.6 7.4 3 7.4 3.4C7.4 5 8.6 5.8 9.6 6.2V12.4C9.6 14.6 12.8 14.6 12.8 12.4V6.2C13.8 5.8 15 5 15 3.4V0.6H13.2V3.6H9.2V0.6Z"/></g><circle cx="11.2" cy="12.2" r="0.8" fill="#1c1c1c"/></svg>
<svg style="left:939px;top:331.6px;" width="14.6" height="13.4" viewBox="0 0 14.6 13.4"><path d="M0.7 3.4H4L5 1.5H9L10 3.4H13.9V12.7H0.7Z" fill="none" stroke="#a0a0a0" stroke-width="1.5"/><path d="M2.6 5.4H9.4V11H2.6Z" fill="#a0a0a0"/><path d="M2.6 7.2H9.4M2.6 9.2H9.4" stroke="#1e1e1e" stroke-width=".8"/><rect x="11" y="5.4" width="1.8" height="1.8" fill="#a0a0a0"/><rect x="11" y="9" width="1.8" height="1.8" fill="#a0a0a0"/><path d="M11 0.8H13.4" stroke="#a0a0a0" stroke-width="1"/></svg>
<svg style="left:939px;top:360px;" width="14.6" height="14.4" viewBox="0 0 14.6 14.4"><path d="M0.4 0.6H14.2V7.4H11.6V4.4H3V7.4H0.4Z" fill="#a0a0a0"/><path d="M3.4 5.4H11.2V13.8H3.4Z" fill="#a0a0a0"/><path d="M4.6 12.4L7.2 8.4L9.2 11L10 12.4Z" fill="#1e1e1e"/><rect x="8.8" y="6.8" width="1.4" height="1.4" fill="#1e1e1e"/></svg>
<svg style="left:938.8px;top:387.6px;" width="15" height="15" viewBox="0 0 15 15"><g fill="none" stroke="#a0a0a0" stroke-width="1"><path d="M2.6 3.6V12.4H11.4"/><path d="M0.8 5.4V14.2H9.6"/><rect x="4.8" y="0.8" width="9.4" height="9.4" stroke-width="1.2"/></g><path d="M5.6 9.4L8.6 4.4L10.4 7.4L11.4 6.4L13.4 9.4Z" fill="#a0a0a0"/><rect x="11" y="2.4" width="1.6" height="1.6" fill="#a0a0a0"/></svg>
<svg style="left:938.6px;top:415.6px;" width="15.4" height="15.4" viewBox="0 0 15.4 15.4"><path d="M4.9 0.4L0.5 10.6C0.3 11.6 7.4 12.6 7.5 11.4Z" fill="#a0a0a0" stroke="#a0a0a0" stroke-width=".8" stroke-linejoin="round"/><circle cx="12.4" cy="2.4" r="2.1" fill="#a0a0a0"/><circle cx="10.4" cy="10.4" r="3.9" fill="#1e1e1e" stroke="#a0a0a0" stroke-width="1.2"/><path d="M8.6 9.6A2.2 2.2 0 0 1 10.2 8.2" stroke="#a0a0a0" stroke-width=".9" fill="none"/></svg>
<svg style="left:938.6px;top:443px;" width="15.4" height="15.4" viewBox="0 0 15.4 15.4"><circle cx="7.5" cy="7.9" r="6.5" fill="none" stroke="#c4505f" stroke-width="1.2"/><path d="M0.8 14.4L2.9 12.4M12.1 3.4L14.3 1.3" stroke="#c4505f" stroke-width="1.1"/><path d="M2.2 5.6C3 3.4 5.4 2.2 7.6 2.4C8.4 3 7.6 3.8 7 4.2C7.8 4.8 8 5.6 7.2 6.2C6.4 6.6 6.2 7.6 5.6 8.2C4.6 8.6 3.4 7.6 2.2 5.6Z" fill="#c4505f"/><path d="M6.6 9C7.8 8.4 10 8.6 11.4 9.6C11.2 11.4 9.8 12.8 8.4 13C7.8 11.8 7.6 10.2 6.6 9Z" fill="#c4505f"/></svg>
<svg style="left:939px;top:481px;" width="14.4" height="13.6" viewBox="0 0 14.4 13.6"><g fill="none" stroke="#e2e2e2" stroke-width="1.3"><rect x="0.7" y="0.7" width="13" height="3.4"/><path d="M1.6 4.4V12.8H12.8V4.4"/></g><rect x="5" y="6.2" width="4.4" height="1.8" fill="#e2e2e2"/></svg>
<svg style="left:938.8px;top:515.6px;" width="14.6" height="14.6" viewBox="0 0 14.6 14.6"><g fill="none" stroke="#e8964e" stroke-width="1.3"><path d="M0.6 4V0.6H4M10 0.6H13.4V4M13.4 10V13.4H10M4 13.4H0.6V10"/></g><rect x="3.4" y="3.4" width="7.2" height="7.2" fill="#e8964e"/></svg>
<svg style="left:938.8px;top:543.6px;" width="15" height="15" viewBox="0 0 15 15"><path d="M1.4 12.2L7.4 6.2C6.4 3.6 8.6 0.8 11.6 1.4L9.4 3.6L10 5.6L12 6.2L14.2 4C14.8 7 12 9.2 9.4 8.2L3.4 14.2C2 15.2 0.4 13.6 1.4 12.2Z" fill="#5b8ee0"/></svg>
<svg style="left:938.6px;top:572px;" width="15" height="15" viewBox="0 0 15 15"><g stroke="#5b8ee0" stroke-width="1" fill="#5b8ee0"><path d="M3 3L13 2.6M3 3L2.8 12.4M3 3L12.4 12" fill="none"/><circle cx="3" cy="3" r="2.4"/><circle cx="13" cy="2.6" r="1"/><circle cx="2.8" cy="12.6" r="1.2"/><circle cx="12.4" cy="12" r="1.6"/></g></svg>
<svg style="left:938.4px;top:599px;" width="15.6" height="15.6" viewBox="0 0 15.6 15.6"><path d="M10.4 13.4A6.4 6.4 0 1 1 10.4 2.6" fill="none" stroke="#5b8ee0" stroke-width="1.1"/><circle cx="7.6" cy="8" r="2.9" fill="#5b8ee0"/><circle cx="12.4" cy="3" r="1.7" fill="#5b8ee0"/></svg>
<svg style="left:938.2px;top:626.8px;" width="16" height="16" viewBox="0 0 16 16"><path d="M11.6 1.6C13.4 0.8 15 2.4 14.4 4.2L11.4 11.6C9.6 15.6 3.6 15.6 1.8 11.4C0.4 7.6 3 4.6 6.4 3.6Z" fill="none" stroke="#5b8ee0" stroke-width="1.1"/><circle cx="6.4" cy="9.6" r="3.5" fill="none" stroke="#5b8ee0" stroke-width="1.1"/><circle cx="6.4" cy="9.6" r="1.5" fill="#5b8ee0"/><circle cx="12" cy="4" r="0.9" fill="#5b8ee0"/></svg>
<svg style="left:938.6px;top:655.4px;" width="15" height="14.6" viewBox="0 0 15 14.6"><g fill="none" stroke="#12cfa0" stroke-width="1.2"><path d="M2.6 2.6H12.4L7.6 12Z"/><rect x="0.8" y="0.8" width="3.4" height="3.4" fill="#1e1e1e"/><rect x="10.8" y="0.8" width="3.4" height="3.4" fill="#1e1e1e"/><rect x="5.8" y="10.4" width="3.4" height="3.4" fill="#1e1e1e"/></g></svg>
<svg style="left:969.8px;top:292.2px;" width="14" height="14" viewBox="0 0 14 14"><g fill="none" stroke="#e4e4e4" stroke-width="1.2"><path d="M0.6 4V0.6H4M10 0.6H13.4V4M13.4 10V13.4H10M4 13.4H0.6V10"/></g><rect x="3.4" y="3.4" width="7.2" height="7.2" fill="#e4e4e4"/></svg>
<span class="t" style="left:993.4px;top:293px;letter-spacing:.16px;color:#e6e6e6">Cube</span>
<svg style="left:1100px;top:292px;" width="14.4" height="14.4" viewBox="0 0 14.4 14.4"><g fill="none" stroke="#a8a8a8" stroke-width="1.1" stroke-linejoin="round"><path d="M8.6 0.8L13.6 5.8L12 6.4L9.2 9.2C9.4 10.4 9 11.4 8.4 12L2.4 6C3 5.4 4 5 5.2 5.2L8 2.4Z"/><path d="M5.2 9L0.6 13.8"/></g></svg>
<div style="left:967.5px;top:325.2px;width:149.1px;height:19.4px;background:#1d1d1d;border:1px solid #3d3d3d;border-radius:4px"></div>
<div style="left:967.5px;top:325.2px;width:31.2px;height:19.4px;background:#282828;border:1px solid #3d3d3d;border-radius:4px 0 0 4px"></div>
<svg style="left:972px;top:328px;" width="14" height="14" viewBox="0 0 14 14"><g fill="none" stroke="#e4e4e4" stroke-width="1.2"><path d="M0.6 4V0.6H4M10 0.6H13.4V4M13.4 10V13.4H10M4 13.4H0.6V10"/></g><rect x="3.4" y="3.4" width="7.2" height="7.2" fill="#e4e4e4"/></svg>
<svg style="left:988.9px;top:333.5px;" width="7" height="3.6" viewBox="0 0 7 3.6"><path d="M0.6 0.3L3.5 3.2L6.4 0.3" fill="none" stroke="#d0d0d0" stroke-width="1.2" stroke-linecap="round" stroke-linejoin="round"/></svg>
<span class="t" style="left:1006.3px;top:329px;letter-spacing:.16px;color:#e6e6e6">Cube</span>
<div style="left:967.2px;top:355.3px;width:149.8px;height:280.6px;background:#3c3c3c;border-radius:4px"></div>
<div style="left:967.2px;top:638.2px;width:149.8px;height:24.6px;background:#3c3c3c;border-radius:4px"></div>
<div style="left:967.2px;top:665px;width:149.8px;height:20px;background:#3c3c3c;border-radius:4px"></div>
<svg style="left:975.2px;top:365.2px;" width="9" height="5.4" viewBox="0 0 9 5.4"><path d="M0.5 0.5L4.5 4.7L8.5 0.5" fill="none" stroke="#d0d0d0" stroke-width="1.1"/></svg>
<span class="t" style="left:990px;top:361.8px;">变换</span>
<svg style="left:1099.8px;top:365.6px;" width="11" height="5" viewBox="0 0 11 5"><rect x="0" y="0" width="1.4" height="1.4" fill="#1f1f1f"/><rect x="0" y="3" width="1.4" height="1.4" fill="#1f1f1f"/><rect x="3" y="0" width="1.4" height="1.4" fill="#1f1f1f"/><rect x="3" y="3" width="1.4" height="1.4" fill="#1f1f1f"/><rect x="6" y="0" width="1.4" height="1.4" fill="#1f1f1f"/><rect x="6" y="3" width="1.4" height="1.4" fill="#1f1f1f"/><rect x="9" y="0" width="1.4" height="1.4" fill="#1f1f1f"/><rect x="9" y="3" width="1.4" height="1.4" fill="#1f1f1f"/></svg>
<svg style="left:992px;top:620px;" width="5.4" height="9" viewBox="0 0 5.4 9"><path d="M0.5 0.5L4.7 4.5L0.5 8.5" fill="none" stroke="#d0d0d0" stroke-width="1.1"/></svg>
<span class="t" style="left:1003.6px;top:618.2px;">变换增量</span>
<svg style="left:977px;top:646.4px;" width="5.4" height="9" viewBox="0 0 5.4 9"><path d="M0.5 0.5L4.7 4.5L0.5 8.5" fill="none" stroke="#d0d0d0" stroke-width="1.1"/></svg>
<span class="t" style="left:988.9px;top:644.9px;">关系</span>
<svg style="left:1099.8px;top:648.4px;" width="11" height="5" viewBox="0 0 11 5"><rect x="0" y="0" width="1.4" height="1.4" fill="#1f1f1f"/><rect x="0" y="3" width="1.4" height="1.4" fill="#1f1f1f"/><rect x="3" y="0" width="1.4" height="1.4" fill="#1f1f1f"/><rect x="3" y="3" width="1.4" height="1.4" fill="#1f1f1f"/><rect x="6" y="0" width="1.4" height="1.4" fill="#1f1f1f"/><rect x="6" y="3" width="1.4" height="1.4" fill="#1f1f1f"/><rect x="9" y="0" width="1.4" height="1.4" fill="#1f1f1f"/><rect x="9" y="3" width="1.4" height="1.4" fill="#1f1f1f"/></svg>
<svg style="left:977px;top:673px;" width="5.4" height="9" viewBox="0 0 5.4 9"><path d="M0.5 0.5L4.7 4.5L0.5 8.5" fill="none" stroke="#d0d0d0" stroke-width="1.1"/></svg>
<span class="t" style="left:988.9px;top:671.3px;">集合</span>
<svg style="left:1099.8px;top:675px;" width="11" height="5" viewBox="0 0 11 5"><rect x="0" y="0" width="1.4" height="1.4" fill="#1f1f1f"/><rect x="0" y="3" width="1.4" height="1.4" fill="#1f1f1f"/><rect x="3" y="0" width="1.4" height="1.4" fill="#1f1f1f"/><rect x="3" y="3" width="1.4" height="1.4" fill="#1f1f1f"/><rect x="6" y="0" width="1.4" height="1.4" fill="#1f1f1f"/><rect x="6" y="3" width="1.4" height="1.4" fill="#1f1f1f"/><rect x="9" y="0" width="1.4" height="1.4" fill="#1f1f1f"/><rect x="9" y="3" width="1.4" height="1.4" fill="#1f1f1f"/></svg>
<div style="left:1025.9px;top:388.9px;width:42.2px;height:18px;background:#545454;border-radius:4px 0 0 0;text-align:center"></div>
<span class="t" style="left:1025.4px;top:392.3px;width:42.2px;text-align:center;letter-spacing:.3px;word-spacing:.6px">0 m</span>
<span class="t" style="left:956.6px;top:392.3px;width:60px;text-align:right">位置 X</span>
<svg style="left:1071.8px;top:391.9px;" width="14.4" height="12" viewBox="0 0 14.4 12"><g fill="none" stroke="#b8b8b8" stroke-width="1.05"><path d="M0.8 5.6C0.6 0.2 6.4 0.2 6.4 4.2V6"/><rect x="5.2" y="6" width="8.4" height="5.6"/><path d="M8.2 8.8H10.6" stroke-width="1.3"/></g></svg>
<svg style="left:1097px;top:395.9px;" width="4" height="4" viewBox="0 0 4 4"><circle cx="2" cy="2" r="1.9" fill="#e0e0e0"/></svg>
<div style="left:1025.9px;top:407.9px;width:42.2px;height:19.2px;background:#545454;border-radius:0;text-align:center"></div>
<span class="t" style="left:1025.4px;top:411.9px;width:42.2px;text-align:center;letter-spacing:.3px;word-spacing:.6px">0 m</span>
<span class="t" style="left:956.6px;top:411.9px;width:60px;text-align:right">Y</span>
<svg style="left:1071.8px;top:411.5px;" width="14.4" height="12" viewBox="0 0 14.4 12"><g fill="none" stroke="#b8b8b8" stroke-width="1.05"><path d="M0.8 5.6C0.6 0.2 6.4 0.2 6.4 4.2V6"/><rect x="5.2" y="6" width="8.4" height="5.6"/><path d="M8.2 8.8H10.6" stroke-width="1.3"/></g></svg>
<svg style="left:1097px;top:415.5px;" width="4" height="4" viewBox="0 0 4 4"><circle cx="2" cy="2" r="1.9" fill="#e0e0e0"/></svg>
<div style="left:1025.9px;top:428px;width:42.2px;height:18.9px;background:#545454;border-radius:0 0 0 4px;text-align:center"></div>
<span class="t" style="left:1025.4px;top:431.85px;width:42.2px;text-align:center;letter-spacing:.3px;word-spacing:.6px">0 m</span>
<span class="t" style="left:956.6px;top:431.85px;width:60px;text-align:right">Z</span>
<svg style="left:1071.8px;top:431.45px;" width="14.4" height="12" viewBox="0 0 14.4 12"><g fill="none" stroke="#b8b8b8" stroke-width="1.05"><path d="M0.8 5.6C0.6 0.2 6.4 0.2 6.4 4.2V6"/><rect x="5.2" y="6" width="8.4" height="5.6"/><path d="M8.2 8.8H10.6" stroke-width="1.3"/></g></svg>
<svg style="left:1097px;top:435.45px;" width="4" height="4" viewBox="0 0 4 4"><circle cx="2" cy="2" r="1.9" fill="#e0e0e0"/></svg>
<div style="left:1025.9px;top:453.8px;width:42.2px;height:18.2px;background:#545454;border-radius:4px 0 0 0;text-align:center"></div>
<span class="t" style="left:1025.4px;top:457.3px;width:42.2px;text-align:center;letter-spacing:.3px;word-spacing:.6px">0°</span>
<span class="t" style="left:956.6px;top:457.3px;width:60px;text-align:right">旋转 X</span>
<svg style="left:1071.8px;top:456.9px;" width="14.4" height="12" viewBox="0 0 14.4 12"><g fill="none" stroke="#b8b8b8" stroke-width="1.05"><path d="M0.8 5.6C0.6 0.2 6.4 0.2 6.4 4.2V6"/><rect x="5.2" y="6" width="8.4" height="5.6"/><path d="M8.2 8.8H10.6" stroke-width="1.3"/></g></svg>
<svg style="left:1097px;top:460.9px;" width="4" height="4" viewBox="0 0 4 4"><circle cx="2" cy="2" r="1.9" fill="#e0e0e0"/></svg>
<div style="left:1025.9px;top:473px;width:42.2px;height:18.8px;background:#545454;border-radius:0;text-align:center"></div>
<span class="t" style="left:1025.4px;top:476.8px;width:42.2px;text-align:center;letter-spacing:.3px;word-spacing:.6px">0°</span>
<span class="t" style="left:956.6px;top:476.8px;width:60px;text-align:right">Y</span>
<svg style="left:1071.8px;top:476.4px;" width="14.4" height="12" viewBox="0 0 14.4 12"><g fill="none" stroke="#b8b8b8" stroke-width="1.05"><path d="M0.8 5.6C0.6 0.2 6.4 0.2 6.4 4.2V6"/><rect x="5.2" y="6" width="8.4" height="5.6"/><path d="M8.2 8.8H10.6" stroke-width="1.3"/></g></svg>
<svg style="left:1097px;top:480.4px;" width="4" height="4" viewBox="0 0 4 4"><circle cx="2" cy="2" r="1.9" fill="#e0e0e0"/></svg>
<div style="left:1025.9px;top:492.8px;width:42.2px;height:19.2px;background:#545454;border-radius:0 0 0 4px;text-align:center"></div>
<span class="t" style="left:1025.4px;top:496.8px;width:42.2px;text-align:center;letter-spacing:.3px;word-spacing:.6px">0°</span>
<span class="t" style="left:956.6px;top:496.8px;width:60px;text-align:right">Z</span>
<svg style="left:1071.8px;top:496.4px;" width="14.4" height="12" viewBox="0 0 14.4 12"><g fill="none" stroke="#b8b8b8" stroke-width="1.05"><path d="M0.8 5.6C0.6 0.2 6.4 0.2 6.4 4.2V6"/><rect x="5.2" y="6" width="8.4" height="5.6"/><path d="M8.2 8.8H10.6" stroke-width="1.3"/></g></svg>
<svg style="left:1097px;top:500.4px;" width="4" height="4" viewBox="0 0 4 4"><circle cx="2" cy="2" r="1.9" fill="#e0e0e0"/></svg>
<div style="left:1025.9px;top:518.8px;width:42.2px;height:17.8px;background:#282828;border:1px solid #3d3d3d;border-radius:4px"></div>
<span class="t" style="left:1032.4px;top:522.2px;letter-spacing:.16px;">XY<i style="font-style:normal;letter-spacing:-.5px">...</i></span>
<svg style="left:1058.1px;top:526.7px;" width="7" height="3.6" viewBox="0 0 7 3.6"><path d="M0.6 0.3L3.5 3.2L6.4 0.3" fill="none" stroke="#d0d0d0" stroke-width="1.2" stroke-linecap="round" stroke-linejoin="round"/></svg>
<span class="t" style="left:956.6px;top:521.8px;width:60px;text-align:right">模式</span>
<svg style="left:1097px;top:525.7px;" width="4" height="4" viewBox="0 0 4 4"><circle cx="2" cy="2" r="1.9" fill="#e0e0e0"/></svg>
<div style="left:1025.9px;top:543.9px;width:42.2px;height:18.1px;background:#545454;border-radius:4px 0 0 0;text-align:center"></div>
<span class="t" style="left:1025.4px;top:547.35px;width:42.2px;text-align:center;letter-spacing:.3px;word-spacing:.6px">1.0</span>
<span class="t" style="left:956.6px;top:547.35px;width:60px;text-align:right">缩放 X</span>
<svg style="left:1071.8px;top:546.95px;" width="14.4" height="12" viewBox="0 0 14.4 12"><g fill="none" stroke="#b8b8b8" stroke-width="1.05"><path d="M0.8 5.6C0.6 0.2 6.4 0.2 6.4 4.2V6"/><rect x="5.2" y="6" width="8.4" height="5.6"/><path d="M8.2 8.8H10.6" stroke-width="1.3"/></g></svg>
<svg style="left:1097px;top:550.95px;" width="4" height="4" viewBox="0 0 4 4"><circle cx="2" cy="2" r="1.9" fill="#e0e0e0"/></svg>
<div style="left:1025.9px;top:563px;width:42.2px;height:18.7px;background:#545454;border-radius:0;text-align:center"></div>
<span class="t" style="left:1025.4px;top:566.75px;width:42.2px;text-align:center;letter-spacing:.3px;word-spacing:.6px">1.0</span>
<span class="t" style="left:956.6px;top:566.75px;width:60px;text-align:right">Y</span>
<svg style="left:1071.8px;top:566.35px;" width="14.4" height="12" viewBox="0 0 14.4 12"><g fill="none" stroke="#b8b8b8" stroke-width="1.05"><path d="M0.8 5.6C0.6 0.2 6.4 0.2 6.4 4.2V6"/><rect x="5.2" y="6" width="8.4" height="5.6"/><path d="M8.2 8.8H10.6" stroke-width="1.3"/></g></svg>
<svg style="left:1097px;top:570.35px;" width="4" height="4" viewBox="0 0 4 4"><circle cx="2" cy="2" r="1.9" fill="#e0e0e0"/></svg>
<div style="left:1025.9px;top:582.7px;width:42.2px;height:19.3px;background:#545454;border-radius:0 0 0 4px;text-align:center"></div>
<span class="t" style="left:1025.4px;top:586.75px;width:42.2px;text-align:center;letter-spacing:.3px;word-spacing:.6px">1.0</span>
<span class="t" style="left:956.6px;top:586.75px;width:60px;text-align:right">Z</span>
<svg style="left:1071.8px;top:586.35px;" width="14.4" height="12" viewBox="0 0 14.4 12"><g fill="none" stroke="#b8b8b8" stroke-width="1.05"><path d="M0.8 5.6C0.6 0.2 6.4 0.2 6.4 4.2V6"/><rect x="5.2" y="6" width="8.4" height="5.6"/><path d="M8.2 8.8H10.6" stroke-width="1.3"/></g></svg>
<svg style="left:1097px;top:590.35px;" width="4" height="4" viewBox="0 0 4 4"><circle cx="2" cy="2" r="1.9" fill="#e0e0e0"/></svg>
<div style="left:1px;top:631.4px;width:927.4px;height:46px;background:#1d1d1d;border-radius:5px 5px 0 0;overflow:hidden"></div>
<div style="left:1px;top:631.4px;width:927.4px;height:24.5px;background:#303030;border-radius:5px 5px 0 0"></div>
<span class="t" style="left:78.721px;top:662.3px;width:40px;text-align:center;color:#8c8c8c">20</span>
<span class="t" style="left:147.901px;top:662.3px;width:40px;text-align:center;color:#8c8c8c">40</span>
<span class="t" style="left:217.081px;top:662.3px;width:40px;text-align:center;color:#8c8c8c">60</span>
<span class="t" style="left:286.261px;top:662.3px;width:40px;text-align:center;color:#8c8c8c">80</span>
<span class="t" style="left:355.441px;top:662.3px;width:40px;text-align:center;color:#8c8c8c">100</span>
<span class="t" style="left:424.621px;top:662.3px;width:40px;text-align:center;color:#8c8c8c">120</span>
<span class="t" style="left:493.801px;top:662.3px;width:40px;text-align:center;color:#8c8c8c">140</span>
<span class="t" style="left:562.981px;top:662.3px;width:40px;text-align:center;color:#8c8c8c">160</span>
<span class="t" style="left:632.161px;top:662.3px;width:40px;text-align:center;color:#8c8c8c">180</span>
<span class="t" style="left:701.341px;top:662.3px;width:40px;text-align:center;color:#8c8c8c">200</span>
<span class="t" style="left:770.521px;top:662.3px;width:40px;text-align:center;color:#8c8c8c">220</span>
<span class="t" style="left:839.701px;top:662.3px;width:40px;text-align:center;color:#8c8c8c">240</span>
<div style="left:22.8px;top:659px;width:23.6px;height:14px;background:#4772b3;border-radius:4px;color:#fff;text-align:center"><span class="t" style="left:0;top:3.6px;width:23.6px;text-align:center;color:#fff">1</span></div>
<div style="left:34px;top:673px;width:1.6px;height:5px;background:#4772b3"></div>
<div style="left:8.4px;top:665.9px;width:912.2px;height:9.9px;background:#505050;border-radius:5px"></div>
<svg style="left:9.6px;top:667.4px;" width="7" height="7" viewBox="0 0 7 7"><circle cx="3.5" cy="3.5" r="3.1" fill="#2b2b2b"/></svg>
<svg style="left:911.8px;top:667.4px;" width="7" height="7" viewBox="0 0 7 7"><circle cx="3.5" cy="3.5" r="3.1" fill="#2b2b2b"/></svg>
<svg style="left:2px;top:672px;" width="5" height="6" viewBox="0 0 5 6"><path d="M0.6 1.4L3.4 5" stroke="#505050" stroke-width="1"/></svg>
<svg style="left:921px;top:670px;" width="7" height="7" viewBox="0 0 7 7"><path d="M2 6.4L6.4 2" stroke="#505050" stroke-width="1"/></svg>
<div style="left:8.2px;top:634px;width:31.8px;height:20px;background:#272727;border:1px solid #3c3c3c;border-radius:4.5px;"></div>
<svg style="left:13px;top:637px;" width="15" height="15" viewBox="0 0 15 15"><circle cx="7.4" cy="7.4" r="7" fill="#ececec"/><path d="M8.4 3.2L4.4 7.8L8.6 11.8L10.6 11.6L7.4 7.6L10.4 3.4Z" fill="#282828"/></svg>
<svg style="left:29.9px;top:642.7px;" width="7" height="3.6" viewBox="0 0 7 3.6"><path d="M0.6 0.3L3.5 3.2L6.4 0.3" fill="none" stroke="#d0d0d0" stroke-width="1.2" stroke-linecap="round" stroke-linejoin="round"/></svg>
<div style="left:45.3px;top:634px;width:123.6px;height:20px;background:#272727;border:1px solid #3c3c3c;border-radius:4.5px;"></div>
<div style="left:90.6px;top:635.5px;width:1px;height:17px;background:#3a3a3a"></div>
<span class="t" style="left:53.5px;top:637.5px;">回放</span>
<svg style="left:81.9px;top:642.7px;" width="7" height="3.6" viewBox="0 0 7 3.6"><path d="M0.6 0.3L3.5 3.2L6.4 0.3" fill="none" stroke="#d0d0d0" stroke-width="1.2" stroke-linecap="round" stroke-linejoin="round"/></svg>
<span class="t" style="left:99.4px;top:637.5px;">抠像(插帧)</span>
<svg style="left:158.7px;top:642.7px;" width="7" height="3.6" viewBox="0 0 7 3.6"><path d="M0.6 0.3L3.5 3.2L6.4 0.3" fill="none" stroke="#d0d0d0" stroke-width="1.2" stroke-linecap="round" stroke-linejoin="round"/></svg>
<span class="t" style="left:178.4px;top:637.5px;">视图</span>
<span class="t" style="left:215.6px;top:637.5px;">标记</span>
<div style="left:371.7px;top:634.5px;width:38.7px;height:19px;background:#2c2c2c;border:1px solid #383838;border-radius:4px"></div>
<div style="left:371.7px;top:634.5px;width:19px;height:19px;background:#4c4c4c;border-radius:4px 0 0 4px"></div>
<svg style="left:376.6px;top:639.6px;" width="9" height="9" viewBox="0 0 9 9"><circle cx="4.5" cy="4.5" r="4.2" fill="#e8e8e8"/></svg>
<svg style="left:397.1px;top:642.7px;" width="7" height="3.6" viewBox="0 0 7 3.6"><path d="M0.6 0.3L3.5 3.2L6.4 0.3" fill="none" stroke="#5a5a5a" stroke-width="1.2" stroke-linecap="round" stroke-linejoin="round"/></svg>
<div style="left:417px;top:634.5px;width:118.3px;height:19px;background:#545454;border-radius:4px"></div>
<div style="left:435.1px;top:635.5px;width:1px;height:17px;background:#3c3c3c"></div>
<div style="left:455.4px;top:635.5px;width:1px;height:17px;background:#3c3c3c"></div>
<div style="left:475.1px;top:635.5px;width:1px;height:17px;background:#3c3c3c"></div>
<div style="left:495.3px;top:635.5px;width:1px;height:17px;background:#3c3c3c"></div>
<div style="left:515.1px;top:635.5px;width:1px;height:17px;background:#3c3c3c"></div>
<svg style="left:420.6px;top:639px;" width="11" height="10" viewBox="0 0 11 10"><path d="M1 0.4V9.6" stroke="#ececec" stroke-width="1.6"/><path d="M10 0.4V9.6L3 5Z" fill="#ececec"/></svg>
<svg style="left:438px;top:639px;" width="16" height="10" viewBox="0 0 16 10"><path d="M4.4 0.4L8.6 5L4.4 9.6L0.4 5Z" fill="#ececec"/><path d="M15.4 0.6V9.4L9.2 5Z" fill="#ececec"/></svg>
<svg style="left:459.8px;top:637.8px;" width="11.6" height="12.6" viewBox="0 0 11.6 12.6"><path d="M11 0.4V12.2L0.6 6.3Z" fill="#ececec"/></svg>
<svg style="left:480.4px;top:637.8px;" width="11.6" height="12.6" viewBox="0 0 11.6 12.6"><path d="M0.6 0.4V12.2L11 6.3Z" fill="#ececec"/></svg>
<svg style="left:497.6px;top:639px;" width="16" height="10" viewBox="0 0 16 10"><path d="M11.6 0.4L15.6 5L11.6 9.6L7.4 5Z" fill="#ececec"/><path d="M0.6 0.6V9.4L6.8 5Z" fill="#ececec"/></svg>
<svg style="left:519.6px;top:639px;" width="11" height="10" viewBox="0 0 11 10"><path d="M10 0.4V9.6" stroke="#ececec" stroke-width="1.6"/><path d="M1 0.4V9.6L8 5Z" fill="#ececec"/></svg>
<div style="left:638.6px;top:634.5px;width:73.6px;height:19px;background:#545454;border-radius:4px"></div>
<span class="t" style="left:637.8px;top:638px;width:73.6px;text-align:center">1</span>
<div style="left:718.8px;top:634.5px;width:201.7px;height:19px;background:#545454;border-radius:4px"></div>
<div style="left:737.4px;top:634.5px;width:1px;height:19px;background:#3c3c3c"></div>
<div style="left:824.2px;top:634.5px;width:1px;height:19px;background:#3c3c3c"></div>
<svg style="left:721.6px;top:637px;" width="14" height="15" viewBox="0 0 14 15"><g fill="none" stroke="#ececec" stroke-width="1.15"><circle cx="7" cy="8.4" r="5.6"/><path d="M7 5V8.6H10M5.4 0.8H8.6M7 0.8V2.8M11.4 3L12.6 4.2"/></g></svg>
<span class="t" style="left:753px;top:637.5px;">起始</span>
<span class="t" style="left:780.6px;top:638px;width:30px;text-align:right">1</span>
<span class="t" style="left:840.5px;top:637.5px;">结束点</span>
<span class="t" style="left:876.2px;top:638px;width:30px;text-align:right">250</span>
<div style="left:0px;top:678px;width:1125px;height:20px;background:#1d1d1d"></div>
<svg style="left:11.8px;top:681px;" width="11" height="15" viewBox="0 0 11 15"><rect x="0.7" y="0.7" width="9.6" height="13.4" rx="4" fill="none" stroke="#8c8c8c" stroke-width="1.2"/><path d="M0.6 6.4V4.6A4 4 0 0 1 4.6 0.6H5.4V6.4Z" fill="#8c8c8c"/></svg>
<span class="t" style="left:34px;top:681.9px;color:#8c8c8c">选择</span>
<svg style="left:223.4px;top:681px;" width="11" height="15" viewBox="0 0 11 15"><rect x="0.7" y="0.7" width="9.6" height="13.4" rx="4" fill="none" stroke="#8c8c8c" stroke-width="1.2"/><rect x="4" y="2.4" width="3" height="5" rx="1.2" fill="#8c8c8c"/></svg>
<span class="t" style="left:245.5px;top:681.9px;color:#8c8c8c">视图中心对齐鼠标</span>
<svg style="left:434.2px;top:681px;" width="11" height="15" viewBox="0 0 11 15"><rect x="0.7" y="0.7" width="9.6" height="13.4" rx="4" fill="none" stroke="#8c8c8c" stroke-width="1.2"/><path d="M10.4 6.4V4.6A4 4 0 0 0 6.4 0.6H5.6V6.4Z" fill="#8c8c8c"/></svg>
<span class="t" style="left:1075.4px;top:682px;width:40px;text-align:right;color:#8c8c8c">3.2.1</span>
</div>
</body></html>
